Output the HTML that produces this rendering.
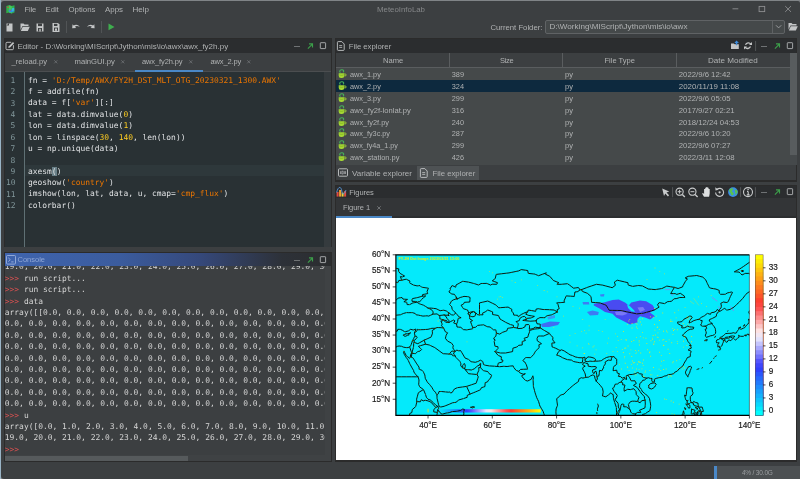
<!DOCTYPE html>
<html lang="en"><head><meta charset="utf-8"><title>MeteoInfoLab</title>
<style>
*{box-sizing:border-box;margin:0;padding:0}
html,body{width:800px;height:479px;overflow:hidden;background:#808487}
body{font-family:"Liberation Sans", "DejaVu Sans", sans-serif;font-size:8.3px;color:#bbbbbb;position:relative}
.abs{position:absolute}
#root{position:absolute;left:0;top:0;width:800px;height:479px;will-change:transform;transform:translateZ(0)}
#win{position:absolute;left:1px;top:1px;width:799px;height:478px;background:#3c3f41;border-radius:3px 2px 1px 3px;overflow:hidden}
.t{position:absolute;white-space:pre;line-height:12px;height:12px}
.mono{font-family:"DejaVu Sans Mono", "Liberation Mono", monospace;font-size:7.93px;white-space:pre;position:absolute}
.ptitle{position:absolute;background:#2b2d2f;height:14px}
svg{position:absolute;overflow:visible}
</style></head>
<body>
<div id="root">
<div class="abs" style="left:0px;top:0px;width:1.2px;height:479px;background:#9ab4c6;"></div><div id="win"></div><svg style="left:5.8px;top:4.6px" width="9" height="9" viewBox="0 0 9 9">
<path d="M0.3 1l2.6-0.8 2.8 0.9 2.8-0.8v7.2l-2.8 0.9-2.8-0.9-2.6 0.8z" fill="#2fb24a"/>
<path d="M2.9 0.2l2.8 0.9v7.3l-2.8-0.9z" fill="#45c85a"/>
<path d="M2.6 5.2l1.6-1 1.2 0.8 1.4-2.2 1.5 0.4v3l-2.6 1.4-3.1-1z" fill="#2f8fe0"/>
<path d="M6.2 3.2l1.6-0.4v2.6l-1.6 0.8z" fill="#37c6d8"/>
<circle cx="2" cy="2.3" r="0.8" fill="#e0463c"/><circle cx="4.3" cy="5.2" r="0.55" fill="#e0463c"/>
</svg><div class="t" style="left:24.50px;top:3.70px;color:#b0b2b3;font-size:7.50px;letter-spacing:-0.146px;">File</div><div class="t" style="left:45.50px;top:3.70px;color:#b0b2b3;font-size:7.69px;letter-spacing:0.000px;">Edit</div><div class="t" style="left:68.50px;top:3.70px;color:#b0b2b3;font-size:7.83px;letter-spacing:0.000px;">Options</div><div class="t" style="left:105.00px;top:3.70px;color:#b0b2b3;font-size:7.90px;letter-spacing:0.000px;">Apps</div><div class="t" style="left:132.50px;top:3.70px;color:#b0b2b3;font-size:8.02px;letter-spacing:0.000px;">Help</div><div class="t" style="left:377.00px;top:3.70px;color:#858789;font-size:7.85px;letter-spacing:0.000px;">MeteoInfoLab</div><svg style="left:700px;top:0" width="100" height="18" viewBox="0 0 100 18">
<path d="M32.5 8.8h5.8" stroke="#8d8f91" stroke-width="0.9" fill="none"/>
<rect x="59.1" y="6.4" width="5.6" height="5.2" stroke="#8d8f91" stroke-width="0.9" fill="none"/>
<path d="M85.2 6.1l5.8 5.8M91 6.1l-5.8 5.8" stroke="#8d8f91" stroke-width="0.9" fill="none"/>
</svg><svg style="left:0;top:18px" width="130" height="18" viewBox="0 0 130 18">
<!-- new -->
<path d="M6.5 5.5h4l2 0v8h-6z" fill="#c4c6c7"/><path d="M6.5 7.5l2.5-2.5v2.5z" fill="#3c3f41"/>
<!-- open -->
<path d="M20.5 5.5h3l1 1h4v1.5h-6l-2 4z" fill="#c4c6c7"/><path d="M22.8 8.8h7l-2 4.2h-7z" fill="#c4c6c7"/>
<!-- save -->
<path d="M36.5 5.5h7v8h-7z" fill="#c4c6c7"/><rect x="38" y="5.5" width="4" height="2.6" fill="#3c3f41"/><rect x="38" y="10" width="4" height="3.5" fill="#3c3f41"/><rect x="39.3" y="10.8" width="1.4" height="2.7" fill="#c4c6c7"/>
<!-- save as -->
<path d="M52.5 5h5.5l1.5 1.5v7.5h-7z" fill="#c4c6c7"/><rect x="54" y="5.8" width="3.4" height="2.2" fill="#3c3f41"/><rect x="54" y="9.6" width="4" height="3.2" fill="#3c3f41"/><rect x="55" y="10.5" width="2" height="2.3" fill="#c4c6c7"/>
<path d="M66.5 3v12" stroke="#515456" stroke-width="1"/>
<!-- undo -->
<path d="M72.2 10.3l0.3-4 1.2 1.2c2-1.4 4.6-1 6 1.6-1.8-1.3-3.4-1.3-4.8-0.4l1.3 1.3z" fill="#c4c6c7"/>
<!-- redo -->
<path d="M94.6 10.3l-0.3-4-1.2 1.2c-2-1.4-4.6-1-6 1.6 1.8-1.3 3.4-1.3 4.8-0.4l-1.3 1.3z" fill="#c4c6c7"/>
<path d="M101.5 3v12" stroke="#515456" stroke-width="1"/>
<!-- run -->
<path d="M108.5 5.5l6 3.4-6 3.4z" fill="#3fae4e"/>
</svg><div class="t" style="left:490.50px;top:21.60px;color:#b0b2b3;font-size:7.73px;letter-spacing:0.000px;">Current Folder:</div><div class="abs" style="left:545px;top:20px;width:240px;height:13.6px;background:#45494a;border:1px solid #606365;border-radius:2px"></div><div class="t" style="left:549.50px;top:21.20px;color:#b0b2b3;font-size:8.10px;letter-spacing:0.000px;">D:\Working\MIScript\Jython\mis\io\awx</div><div class="abs" style="left:772px;top:20.5px;width:1px;height:12.5px;background:#5f6264;"></div><svg style="left:772px;top:19px" width="13" height="15" viewBox="0 0 13 15"><path d="M4 6.3l2.6 2.6 2.6-2.6" stroke="#9a9c9e" stroke-width="1" fill="none"/></svg><svg style="left:788px;top:21px" width="11" height="11" viewBox="0 0 11 11"><path d="M0.5 2h3l1 1h4v1.5h-6l-2 4z" fill="#c4c6c7"/><path d="M2.8 5.3h7l-2 4.2h-7z" fill="#c4c6c7"/></svg><div class="abs" style="left:4px;top:38px;width:327.5px;height:209px;background:#2b2b2b;"></div><div class="abs" style="left:5px;top:39px;width:325.5px;height:14px;background:#2b2d2f;"></div><svg style="left:5px;top:41.2px" width="10" height="10" viewBox="0 0 10 10">
<path d="M6.2 1.3h-4.2a1 1 0 0 0 -1 1v5.4a1 1 0 0 0 1 1h5.4a1 1 0 0 0 1 -1v-3.5" stroke="#c4c6c7" stroke-width="0.9" fill="none"/>
<path d="M3.3 6.9l0.5-1.7 4.2-4.2 1.2 1.2-4.2 4.2z" fill="#c4c6c7"/></svg><div class="t" style="left:17.50px;top:40.50px;color:#b0b2b3;font-size:7.99px;letter-spacing:0.000px;">Editor - D:\Working\MIScript\Jython\mis\io\awx\awx_fy2h.py</div><svg style="left:291px;top:40px" width="40" height="12" viewBox="0 0 40 12">
<path d="M3 6.5h6" stroke="#6f7274" stroke-width="1" fill="none"/>
<path d="M16.9 8.6l4-4M18 3.9h3.5v3.5" stroke="#3c9f4a" stroke-width="1.15" fill="none"/>
<rect x="29.3" y="2.7" width="5.3" height="5.9" stroke="#a2a4a6" stroke-width="1" fill="none" rx="0.4"/>
</svg><div class="abs" style="left:5px;top:53px;width:325.5px;height:19px;background:#3c3f41;"></div><div class="abs" style="left:5px;top:70.8px;width:325.5px;height:1px;background:#4b4e50;"></div><div class="t" style="left:11.50px;top:55.50px;color:#b0b2b3;font-size:7.60px;letter-spacing:0.000px;">_reload.py</div><svg style="left:53.7px;top:59.9px" width="3.6" height="3.6" viewBox="0 0 4 4"><path d="M0.3 0.3l3.4 3.4M3.7 0.3l-3.4 3.4" stroke="#7d8082" stroke-width="0.7"/></svg><div class="t" style="left:74.50px;top:55.50px;color:#b0b2b3;font-size:7.67px;letter-spacing:0.000px;">mainGUI.py</div><svg style="left:120.7px;top:59.9px" width="3.6" height="3.6" viewBox="0 0 4 4"><path d="M0.3 0.3l3.4 3.4M3.7 0.3l-3.4 3.4" stroke="#7d8082" stroke-width="0.7"/></svg><div class="t" style="left:142.00px;top:55.50px;color:#b0b2b3;font-size:7.50px;letter-spacing:-0.108px;">awx_fy2h.py</div><svg style="left:188.7px;top:59.9px" width="3.6" height="3.6" viewBox="0 0 4 4"><path d="M0.3 0.3l3.4 3.4M3.7 0.3l-3.4 3.4" stroke="#7d8082" stroke-width="0.7"/></svg><div class="t" style="left:210.50px;top:55.50px;color:#b0b2b3;font-size:7.50px;letter-spacing:-0.148px;">awx_2.py</div><svg style="left:247.2px;top:59.9px" width="3.6" height="3.6" viewBox="0 0 4 4"><path d="M0.3 0.3l3.4 3.4M3.7 0.3l-3.4 3.4" stroke="#7d8082" stroke-width="0.7"/></svg><div class="abs" style="left:135px;top:70px;width:68px;height:1.7px;background:#4a88c7;"></div><div class="abs" style="left:5px;top:72px;width:319px;height:174.5px;background:#293134;"></div><div class="abs" style="left:324px;top:72px;width:6.5px;height:174.5px;background:#353b3e;"></div><div class="abs" style="left:25px;top:165.01px;width:299px;height:11.37px;background:#2e383b;"></div><div class="abs" style="left:24px;top:72px;width:1px;height:174.5px;background:#5f7074;"></div><div class="mono" style="left:10.6px;top:74.95px;line-height:11.37px;color:#81969a">1</div><div class="mono" style="left:28px;top:74.75px;line-height:11.37px"><span style="color:#e0e2e4">fn = </span><span style="color:#ec7600">&#x27;D:/Temp/AWX/FY2H_DST_MLT_OTG_20230321_1300.AWX&#x27;</span></div><div class="mono" style="left:10.6px;top:86.32000000000001px;line-height:11.37px;color:#81969a">2</div><div class="mono" style="left:28px;top:86.12px;line-height:11.37px"><span style="color:#e0e2e4">f = addfile(fn)</span></div><div class="mono" style="left:10.6px;top:97.69px;line-height:11.37px;color:#81969a">3</div><div class="mono" style="left:28px;top:97.49px;line-height:11.37px"><span style="color:#e0e2e4">data = f[</span><span style="color:#ec7600">&#x27;var&#x27;</span><span style="color:#e0e2e4">][:]</span></div><div class="mono" style="left:10.6px;top:109.06px;line-height:11.37px;color:#81969a">4</div><div class="mono" style="left:28px;top:108.86px;line-height:11.37px"><span style="color:#e0e2e4">lat = data.dimvalue(</span><span style="color:#ffcd22">0</span><span style="color:#e0e2e4">)</span></div><div class="mono" style="left:10.6px;top:120.42999999999999px;line-height:11.37px;color:#81969a">5</div><div class="mono" style="left:28px;top:120.22999999999999px;line-height:11.37px"><span style="color:#e0e2e4">lon = data.dimvalue(</span><span style="color:#ffcd22">1</span><span style="color:#e0e2e4">)</span></div><div class="mono" style="left:10.6px;top:131.79999999999998px;line-height:11.37px;color:#81969a">6</div><div class="mono" style="left:28px;top:131.6px;line-height:11.37px"><span style="color:#e0e2e4">lon = linspace(</span><span style="color:#ffcd22">30</span><span style="color:#e0e2e4">, </span><span style="color:#ffcd22">140</span><span style="color:#e0e2e4">, len(lon))</span></div><div class="mono" style="left:10.6px;top:143.17px;line-height:11.37px;color:#81969a">7</div><div class="mono" style="left:28px;top:142.97px;line-height:11.37px"><span style="color:#e0e2e4">u = np.unique(data)</span></div><div class="mono" style="left:10.6px;top:154.53999999999996px;line-height:11.37px;color:#81969a">8</div><div class="mono" style="left:10.6px;top:165.90999999999997px;line-height:11.37px;color:#81969a">9</div><div class="mono" style="left:28px;top:165.70999999999998px;line-height:11.37px"><span style="color:#e0e2e4">axesm</span><span style="color:#e0e2e4;background:#6a8088">(</span><span style="color:#e0e2e4">)</span></div><div class="mono" style="left:5.9px;top:177.27999999999997px;line-height:11.37px;color:#81969a">10</div><div class="mono" style="left:28px;top:177.07999999999998px;line-height:11.37px"><span style="color:#e0e2e4">geoshow(</span><span style="color:#ec7600">&#x27;country&#x27;</span><span style="color:#e0e2e4">)</span></div><div class="mono" style="left:5.9px;top:188.64999999999998px;line-height:11.37px;color:#81969a">11</div><div class="mono" style="left:28px;top:188.45px;line-height:11.37px"><span style="color:#e0e2e4">imshow(lon, lat, data, u, cmap=</span><span style="color:#ec7600">&#x27;cmp_flux&#x27;</span><span style="color:#e0e2e4">)</span></div><div class="mono" style="left:5.9px;top:200.01999999999998px;line-height:11.37px;color:#81969a">12</div><div class="mono" style="left:28px;top:199.82px;line-height:11.37px"><span style="color:#e0e2e4">colorbar()</span></div><div class="abs" style="left:4px;top:252px;width:327.5px;height:210px;background:#2b2b2b;"></div><div class="abs" style="left:5px;top:253px;width:325.5px;height:12.6px;background:linear-gradient(90deg,#3f64ae 0%,#3b5c9e 35%,#35487a 60%,#2d3138 85%,#2b2d2f 100%)"></div><svg style="left:5.5px;top:254.5px" width="10" height="10" viewBox="0 0 10 10">
<rect x="0.5" y="0.5" width="9" height="8.6" rx="1" stroke="#9ab0dd" stroke-width="0.9" fill="none"/>
<path d="M2.3 2.8l2 1.9-2 1.9M5.2 6.9h2.4" stroke="#9ab0dd" stroke-width="0.9" fill="none"/></svg><div class="t" style="left:17.50px;top:253.70px;color:#8fa6d6;font-size:7.50px;letter-spacing:-0.003px;">Console</div><svg style="left:291px;top:253.5px" width="40" height="12" viewBox="0 0 40 12">
<path d="M3 6.5h6" stroke="#6f7274" stroke-width="1" fill="none"/>
<path d="M16.9 8.6l4-4M18 3.9h3.5v3.5" stroke="#3c9f4a" stroke-width="1.15" fill="none"/>
<rect x="29.3" y="2.7" width="5.3" height="5.9" stroke="#a2a4a6" stroke-width="1" fill="none" rx="0.4"/>
</svg><div class="abs" style="left:5px;top:265.6px;width:325.5px;height:195.4px;background:#3c3f41;"></div><div class="abs" style="left:5px;top:265.6px;width:319.5px;height:189.4px;overflow:hidden"><div class="mono" style="left:-0.2px;top:-4.199999999999989px;line-height:11.4px"><span style="color:#d6d6d6">19.0, 20.0, 21.0, 22.0, 23.0, 24.0, 25.0, 26.0, 27.0, 28.0, 29.0, 30.0, 31.0</span></div><div class="mono" style="left:-0.2px;top:7.199999999999989px;line-height:11.4px"><span style="color:#e25252">&gt;&gt;&gt; </span><span style="color:#d6d6d6">run script...</span></div><div class="mono" style="left:-0.2px;top:18.600000000000023px;line-height:11.4px"><span style="color:#e25252">&gt;&gt;&gt; </span><span style="color:#d6d6d6">run script...</span></div><div class="mono" style="left:-0.2px;top:30.0px;line-height:11.4px"><span style="color:#e25252">&gt;&gt;&gt; </span><span style="color:#d6d6d6">data</span></div><div class="mono" style="left:-0.2px;top:41.400000000000034px;line-height:11.4px"><span style="color:#d6d6d6">array([[0.0, 0.0, 0.0, 0.0, 0.0, 0.0, 0.0, 0.0, 0.0, 0.0, 0.0, 0.0, 0.0, 0.0, 0.0</span></div><div class="mono" style="left:-0.2px;top:52.80000000000001px;line-height:11.4px"><span style="color:#d6d6d6">0.0, 0.0, 0.0, 0.0, 0.0, 0.0, 0.0, 0.0, 0.0, 0.0, 0.0, 0.0, 0.0, 0.0, 0.0, 0.0</span></div><div class="mono" style="left:-0.2px;top:64.20000000000005px;line-height:11.4px"><span style="color:#d6d6d6">0.0, 0.0, 0.0, 0.0, 0.0, 0.0, 0.0, 0.0, 0.0, 0.0, 0.0, 0.0, 0.0, 0.0, 0.0, 0.0</span></div><div class="mono" style="left:-0.2px;top:75.60000000000002px;line-height:11.4px"><span style="color:#d6d6d6">0.0, 0.0, 0.0, 0.0, 0.0, 0.0, 0.0, 0.0, 0.0, 0.0, 0.0, 0.0, 0.0, 0.0, 0.0, 0.0</span></div><div class="mono" style="left:-0.2px;top:87.0px;line-height:11.4px"><span style="color:#d6d6d6">0.0, 0.0, 0.0, 0.0, 0.0, 0.0, 0.0, 0.0, 0.0, 0.0, 0.0, 0.0, 0.0, 0.0, 0.0, 0.0</span></div><div class="mono" style="left:-0.2px;top:98.40000000000003px;line-height:11.4px"><span style="color:#d6d6d6">0.0, 0.0, 0.0, 0.0, 0.0, 0.0, 0.0, 0.0, 0.0, 0.0, 0.0, 0.0, 0.0, 0.0, 0.0, 0.0</span></div><div class="mono" style="left:-0.2px;top:109.80000000000001px;line-height:11.4px"><span style="color:#d6d6d6">0.0, 0.0, 0.0, 0.0, 0.0, 0.0, 0.0, 0.0, 0.0, 0.0, 0.0, 0.0, 0.0, 0.0, 0.0, 0.0</span></div><div class="mono" style="left:-0.2px;top:121.20000000000005px;line-height:11.4px"><span style="color:#d6d6d6">0.0, 0.0, 0.0, 0.0, 0.0, 0.0, 0.0, 0.0, 0.0, 0.0, 0.0, 0.0, 0.0, 0.0, 0.0, 0.0</span></div><div class="mono" style="left:-0.2px;top:132.60000000000002px;line-height:11.4px"><span style="color:#d6d6d6">0.0, 0.0, 0.0, 0.0, 0.0, 0.0, 0.0, 0.0, 0.0, 0.0, 0.0, 0.0, 0.0, 0.0, 0.0, 0.0</span></div><div class="mono" style="left:-0.2px;top:144.0px;line-height:11.4px"><span style="color:#e25252">&gt;&gt;&gt; </span><span style="color:#d6d6d6">u</span></div><div class="mono" style="left:-0.2px;top:155.39999999999998px;line-height:11.4px"><span style="color:#d6d6d6">array([0.0, 1.0, 2.0, 3.0, 4.0, 5.0, 6.0, 7.0, 8.0, 9.0, 10.0, 11.0, 12.0, 13.0</span></div><div class="mono" style="left:-0.2px;top:166.8px;line-height:11.4px"><span style="color:#d6d6d6">19.0, 20.0, 21.0, 22.0, 23.0, 24.0, 25.0, 26.0, 27.0, 28.0, 29.0, 30.0, 31.0</span></div><div class="mono" style="left:-0.2px;top:178.20000000000005px;line-height:11.4px"><span style="color:#e25252">&gt;&gt;&gt; </span></div></div><div class="abs" style="left:324.5px;top:266px;width:6px;height:189px;background:#3f4244;"></div><div class="abs" style="left:5px;top:455px;width:325.5px;height:6px;background:#3f4244;"></div><div class="abs" style="left:5px;top:455.5px;width:183px;height:5.5px;background:#565a5c;"></div><div class="abs" style="left:335px;top:38px;width:462px;height:143.5px;background:#2b2b2b;"></div><div class="abs" style="left:336px;top:39px;width:460px;height:13.5px;background:#2b2d2f;"></div><svg style="left:337px;top:41.2px" width="8" height="10" viewBox="0 0 8 10">
<path d="M1.2 0.6h3.6l2.4 2.4v5.6a0.8 0.8 0 0 1 -0.8 0.8h-5.2a0.8 0.8 0 0 1 -0.8 -0.8v-7.2a0.8 0.8 0 0 1 0.8 -0.8z" stroke="#c4c6c7" stroke-width="0.9" fill="none"/>
<path d="M2.2 4.6h3M2.2 6.4h3" stroke="#c4c6c7" stroke-width="0.8"/></svg><div class="t" style="left:348.75px;top:41.00px;color:#b0b2b3;font-size:7.72px;letter-spacing:0.000px;">File explorer</div><svg style="left:730px;top:40px" width="30" height="12" viewBox="0 0 30 12">
<path d="M1 3.4h2.8l0.9 0.9h4.1v4.6h-7.8z" fill="#c4c6c7"/><path d="M6.6 5.2v-3.6M4.9 3.1l1.7-1.9 1.7 1.9" stroke="#3f8fe0" stroke-width="1.1" fill="none"/>
<path d="M20.9 4.2a3.1 3.1 0 0 0 -5.4 0.6M15.1 7.2a3.1 3.1 0 0 0 5.4 -0.6" stroke="#c4c6c7" stroke-width="1.3" fill="none"/><path d="M22 2v3h-3zM14 9.4v-3h3z" fill="#c4c6c7"/>
<path d="M25.6 1v10" stroke="#515456" stroke-width="1"/>
</svg><svg style="left:757.5px;top:40px" width="40" height="12" viewBox="0 0 40 12">
<path d="M3 6.5h6" stroke="#6f7274" stroke-width="1" fill="none"/>
<path d="M16.9 8.6l4-4M18 3.9h3.5v3.5" stroke="#3c9f4a" stroke-width="1.15" fill="none"/>
<rect x="29.3" y="2.7" width="5.3" height="5.9" stroke="#a2a4a6" stroke-width="1" fill="none" rx="0.4"/>
</svg><div class="abs" style="left:336px;top:52.5px;width:454px;height:15.5px;background:#3c3f41;"></div><div class="abs" style="left:336px;top:67.0px;width:454px;height:0.8px;background:#5a5d5f;"></div><div class="abs" style="left:448.90000000000003px;top:53px;width:0.8px;height:14.3px;background:#5a5d5f;"></div><div class="abs" style="left:562.0px;top:53px;width:0.8px;height:14.3px;background:#5a5d5f;"></div><div class="abs" style="left:675.8000000000001px;top:53px;width:0.8px;height:14.3px;background:#5a5d5f;"></div><div class="t" style="left:383.00px;top:54.70px;color:#b0b2b3;font-size:7.59px;letter-spacing:0.000px;">Name</div><div class="t" style="left:500.00px;top:54.70px;color:#b0b2b3;font-size:7.50px;letter-spacing:-0.335px;">Size</div><div class="t" style="left:604.50px;top:54.70px;color:#b0b2b3;font-size:7.55px;letter-spacing:0.000px;">File Type</div><div class="t" style="left:707.90px;top:54.70px;color:#b0b2b3;font-size:8.10px;letter-spacing:0.000px;">Date Modified</div><div class="abs" style="left:336px;top:67.8px;width:454px;height:97.2px;background:#45494a;"></div><svg style="left:338px;top:68.75px" width="9" height="10" viewBox="0 0 9 10">
<path d="M0.7 4.3h5.6v2.5a2.3 2.3 0 0 1 -2.3 2.3h-1a2.3 2.3 0 0 1 -2.3 -2.3z" fill="#a4d733"/>
<path d="M6.3 5h0.9a0.9 0.9 0 0 1 0 1.9h-0.9" stroke="#a4d733" stroke-width="0.9" fill="none"/>
<path d="M2.4 3.6c-1.3-0.9-0.8-2.6 1.2-2.8 2-0.2 2.9 1.4 1.4 2.5" stroke="#46b45a" stroke-width="1.05" fill="none"/>
<path d="M1.4 5.9c1.3 0.6 2.9 0.6 4.2 0" stroke="#7cab1f" stroke-width="0.7" fill="none"/></svg><div class="t" style="left:350.00px;top:68.77px;color:#b0b2b3;font-size:7.31px;letter-spacing:0.000px;">awx_1.py</div><div class="t" style="left:451.75px;top:68.77px;color:#b0b2b3;font-size:7.34px;letter-spacing:0.000px;">389</div><div class="t" style="left:565.00px;top:68.77px;color:#b0b2b3;font-size:7.57px;letter-spacing:0.000px;">py</div><div class="t" style="left:678.80px;top:68.77px;color:#b0b2b3;font-size:7.75px;letter-spacing:0.000px;">2022/9/6 12:42</div><div class="abs" style="left:336px;top:79.78999999999999px;width:454px;height:11.94px;background:#0d293e;"></div><svg style="left:338px;top:80.69px" width="9" height="10" viewBox="0 0 9 10">
<path d="M0.7 4.3h5.6v2.5a2.3 2.3 0 0 1 -2.3 2.3h-1a2.3 2.3 0 0 1 -2.3 -2.3z" fill="#a4d733"/>
<path d="M6.3 5h0.9a0.9 0.9 0 0 1 0 1.9h-0.9" stroke="#a4d733" stroke-width="0.9" fill="none"/>
<path d="M2.4 3.6c-1.3-0.9-0.8-2.6 1.2-2.8 2-0.2 2.9 1.4 1.4 2.5" stroke="#46b45a" stroke-width="1.05" fill="none"/>
<path d="M1.4 5.9c1.3 0.6 2.9 0.6 4.2 0" stroke="#7cab1f" stroke-width="0.7" fill="none"/></svg><div class="t" style="left:350.00px;top:80.71px;color:#b0b2b3;font-size:7.31px;letter-spacing:0.000px;">awx_2.py</div><div class="t" style="left:451.75px;top:80.71px;color:#b0b2b3;font-size:7.34px;letter-spacing:0.000px;">324</div><div class="t" style="left:565.00px;top:80.71px;color:#b0b2b3;font-size:7.57px;letter-spacing:0.000px;">py</div><div class="t" style="left:678.80px;top:80.71px;color:#b0b2b3;font-size:7.92px;letter-spacing:0.000px;">2020/11/19 11:08</div><svg style="left:338px;top:92.63px" width="9" height="10" viewBox="0 0 9 10">
<path d="M0.7 4.3h5.6v2.5a2.3 2.3 0 0 1 -2.3 2.3h-1a2.3 2.3 0 0 1 -2.3 -2.3z" fill="#a4d733"/>
<path d="M6.3 5h0.9a0.9 0.9 0 0 1 0 1.9h-0.9" stroke="#a4d733" stroke-width="0.9" fill="none"/>
<path d="M2.4 3.6c-1.3-0.9-0.8-2.6 1.2-2.8 2-0.2 2.9 1.4 1.4 2.5" stroke="#46b45a" stroke-width="1.05" fill="none"/>
<path d="M1.4 5.9c1.3 0.6 2.9 0.6 4.2 0" stroke="#7cab1f" stroke-width="0.7" fill="none"/></svg><div class="t" style="left:350.00px;top:92.65px;color:#b0b2b3;font-size:7.31px;letter-spacing:0.000px;">awx_3.py</div><div class="t" style="left:451.75px;top:92.65px;color:#b0b2b3;font-size:7.34px;letter-spacing:0.000px;">299</div><div class="t" style="left:565.00px;top:92.65px;color:#b0b2b3;font-size:7.57px;letter-spacing:0.000px;">py</div><div class="t" style="left:678.80px;top:92.65px;color:#b0b2b3;font-size:7.75px;letter-spacing:0.000px;">2022/9/6 05:05</div><svg style="left:338px;top:104.57px" width="9" height="10" viewBox="0 0 9 10">
<path d="M0.7 4.3h5.6v2.5a2.3 2.3 0 0 1 -2.3 2.3h-1a2.3 2.3 0 0 1 -2.3 -2.3z" fill="#a4d733"/>
<path d="M6.3 5h0.9a0.9 0.9 0 0 1 0 1.9h-0.9" stroke="#a4d733" stroke-width="0.9" fill="none"/>
<path d="M2.4 3.6c-1.3-0.9-0.8-2.6 1.2-2.8 2-0.2 2.9 1.4 1.4 2.5" stroke="#46b45a" stroke-width="1.05" fill="none"/>
<path d="M1.4 5.9c1.3 0.6 2.9 0.6 4.2 0" stroke="#7cab1f" stroke-width="0.7" fill="none"/></svg><div class="t" style="left:350.00px;top:104.59px;color:#b0b2b3;font-size:7.62px;letter-spacing:0.000px;">awx_fy2f-lonlat.py</div><div class="t" style="left:451.75px;top:104.59px;color:#b0b2b3;font-size:7.34px;letter-spacing:0.000px;">316</div><div class="t" style="left:565.00px;top:104.59px;color:#b0b2b3;font-size:7.57px;letter-spacing:0.000px;">py</div><div class="t" style="left:678.80px;top:104.59px;color:#b0b2b3;font-size:7.72px;letter-spacing:0.000px;">2017/9/27 02:21</div><svg style="left:338px;top:116.50999999999999px" width="9" height="10" viewBox="0 0 9 10">
<path d="M0.7 4.3h5.6v2.5a2.3 2.3 0 0 1 -2.3 2.3h-1a2.3 2.3 0 0 1 -2.3 -2.3z" fill="#a4d733"/>
<path d="M6.3 5h0.9a0.9 0.9 0 0 1 0 1.9h-0.9" stroke="#a4d733" stroke-width="0.9" fill="none"/>
<path d="M2.4 3.6c-1.3-0.9-0.8-2.6 1.2-2.8 2-0.2 2.9 1.4 1.4 2.5" stroke="#46b45a" stroke-width="1.05" fill="none"/>
<path d="M1.4 5.9c1.3 0.6 2.9 0.6 4.2 0" stroke="#7cab1f" stroke-width="0.7" fill="none"/></svg><div class="t" style="left:350.00px;top:116.53px;color:#b0b2b3;font-size:7.39px;letter-spacing:0.000px;">awx_fy2f.py</div><div class="t" style="left:451.75px;top:116.53px;color:#b0b2b3;font-size:7.34px;letter-spacing:0.000px;">240</div><div class="t" style="left:565.00px;top:116.53px;color:#b0b2b3;font-size:7.57px;letter-spacing:0.000px;">py</div><div class="t" style="left:678.80px;top:116.53px;color:#b0b2b3;font-size:7.77px;letter-spacing:0.000px;">2018/12/24 04:53</div><svg style="left:338px;top:128.45px" width="9" height="10" viewBox="0 0 9 10">
<path d="M0.7 4.3h5.6v2.5a2.3 2.3 0 0 1 -2.3 2.3h-1a2.3 2.3 0 0 1 -2.3 -2.3z" fill="#a4d733"/>
<path d="M6.3 5h0.9a0.9 0.9 0 0 1 0 1.9h-0.9" stroke="#a4d733" stroke-width="0.9" fill="none"/>
<path d="M2.4 3.6c-1.3-0.9-0.8-2.6 1.2-2.8 2-0.2 2.9 1.4 1.4 2.5" stroke="#46b45a" stroke-width="1.05" fill="none"/>
<path d="M1.4 5.9c1.3 0.6 2.9 0.6 4.2 0" stroke="#7cab1f" stroke-width="0.7" fill="none"/></svg><div class="t" style="left:350.00px;top:128.47px;color:#b0b2b3;font-size:7.27px;letter-spacing:0.000px;">awx_fy3c.py</div><div class="t" style="left:451.75px;top:128.47px;color:#b0b2b3;font-size:7.34px;letter-spacing:0.000px;">287</div><div class="t" style="left:565.00px;top:128.47px;color:#b0b2b3;font-size:7.57px;letter-spacing:0.000px;">py</div><div class="t" style="left:678.80px;top:128.47px;color:#b0b2b3;font-size:7.75px;letter-spacing:0.000px;">2022/9/6 10:20</div><svg style="left:338px;top:140.39000000000001px" width="9" height="10" viewBox="0 0 9 10">
<path d="M0.7 4.3h5.6v2.5a2.3 2.3 0 0 1 -2.3 2.3h-1a2.3 2.3 0 0 1 -2.3 -2.3z" fill="#a4d733"/>
<path d="M6.3 5h0.9a0.9 0.9 0 0 1 0 1.9h-0.9" stroke="#a4d733" stroke-width="0.9" fill="none"/>
<path d="M2.4 3.6c-1.3-0.9-0.8-2.6 1.2-2.8 2-0.2 2.9 1.4 1.4 2.5" stroke="#46b45a" stroke-width="1.05" fill="none"/>
<path d="M1.4 5.9c1.3 0.6 2.9 0.6 4.2 0" stroke="#7cab1f" stroke-width="0.7" fill="none"/></svg><div class="t" style="left:350.00px;top:140.41px;color:#b0b2b3;font-size:7.20px;letter-spacing:-0.002px;">awx_fy4a_1.py</div><div class="t" style="left:451.75px;top:140.41px;color:#b0b2b3;font-size:7.34px;letter-spacing:0.000px;">299</div><div class="t" style="left:565.00px;top:140.41px;color:#b0b2b3;font-size:7.57px;letter-spacing:0.000px;">py</div><div class="t" style="left:678.80px;top:140.41px;color:#b0b2b3;font-size:7.75px;letter-spacing:0.000px;">2022/9/6 07:27</div><svg style="left:338px;top:152.33px" width="9" height="10" viewBox="0 0 9 10">
<path d="M0.7 4.3h5.6v2.5a2.3 2.3 0 0 1 -2.3 2.3h-1a2.3 2.3 0 0 1 -2.3 -2.3z" fill="#a4d733"/>
<path d="M6.3 5h0.9a0.9 0.9 0 0 1 0 1.9h-0.9" stroke="#a4d733" stroke-width="0.9" fill="none"/>
<path d="M2.4 3.6c-1.3-0.9-0.8-2.6 1.2-2.8 2-0.2 2.9 1.4 1.4 2.5" stroke="#46b45a" stroke-width="1.05" fill="none"/>
<path d="M1.4 5.9c1.3 0.6 2.9 0.6 4.2 0" stroke="#7cab1f" stroke-width="0.7" fill="none"/></svg><div class="t" style="left:350.00px;top:152.35px;color:#b0b2b3;font-size:7.48px;letter-spacing:0.000px;">awx_station.py</div><div class="t" style="left:451.75px;top:152.35px;color:#b0b2b3;font-size:7.34px;letter-spacing:0.000px;">426</div><div class="t" style="left:565.00px;top:152.35px;color:#b0b2b3;font-size:7.57px;letter-spacing:0.000px;">py</div><div class="t" style="left:678.80px;top:152.35px;color:#b0b2b3;font-size:7.80px;letter-spacing:0.000px;">2022/3/11 12:08</div><div class="abs" style="left:790.2px;top:52.5px;width:6.4px;height:112.5px;background:#45494b;"></div><div class="abs" style="left:790.2px;top:52.5px;width:6.4px;height:102px;background:#585c5e;"></div><div class="abs" style="left:336px;top:165px;width:460px;height:15px;background:#3c3f41;"></div><div class="abs" style="left:417px;top:165.5px;width:62px;height:14.5px;background:#4e5254;"></div><svg style="left:337.5px;top:168.2px" width="10" height="9" viewBox="0 0 10 9">
<rect x="0.5" y="0.8" width="9" height="7.4" rx="0.8" stroke="#c4c6c7" stroke-width="0.9" fill="none"/>
<path d="M2.5 3.2v2.8M3.8 3.2h1.4v2.8h-1.4zM6.6 3.2v2.8M7.5 3.2v2.8" stroke="#c4c6c7" stroke-width="0.6" fill="none"/></svg><div class="t" style="left:352.00px;top:168.00px;color:#b0b2b3;font-size:8.02px;letter-spacing:0.000px;">Variable explorer</div><svg style="left:420px;top:168px" width="8" height="10" viewBox="0 0 8 10">
<path d="M1.2 0.6h3.6l2.4 2.4v5.6a0.8 0.8 0 0 1 -0.8 0.8h-5.2a0.8 0.8 0 0 1 -0.8 -0.8v-7.2a0.8 0.8 0 0 1 0.8 -0.8z" stroke="#c4c6c7" stroke-width="0.9" fill="none"/>
<path d="M2.2 4.6h3M2.2 6.4h3" stroke="#c4c6c7" stroke-width="0.8"/></svg><div class="t" style="left:432.50px;top:168.00px;color:#b0b2b3;font-size:7.77px;letter-spacing:0.000px;">File explorer</div><div class="abs" style="left:335px;top:185px;width:462px;height:277px;background:#2b2b2b;"></div><div class="abs" style="left:336px;top:186px;width:460px;height:12px;background:#2b2d2f;"></div><svg style="left:335.8px;top:187.2px" width="11" height="10" viewBox="0 0 11 10">
<rect x="0.6" y="5" width="2" height="4.6" fill="#e04a3f"/><rect x="3.1" y="3" width="2" height="6.6" fill="#f0a030"/><rect x="5.6" y="5.6" width="2" height="4" fill="#e9d23c"/><rect x="8.1" y="4" width="2" height="5.6" fill="#e04a3f"/>
<path d="M0.6 5.5c1.6-6.5 4.4-6.5 5.2-1.5s2.6 3 4.2-1" stroke="#5a9be0" stroke-width="0.9" fill="none"/></svg><div class="t" style="left:349.25px;top:186.80px;color:#b0b2b3;font-size:7.50px;letter-spacing:-0.073px;">Figures</div><div class="abs" style="left:336px;top:198px;width:460px;height:19.8px;background:#333537;"></div><div class="t" style="left:343.00px;top:202.40px;color:#b0b2b3;font-size:7.50px;letter-spacing:-0.064px;">Figure 1</div><svg style="left:377px;top:206px" width="4" height="4" viewBox="0 0 4 4"><path d="M0.3 0.3l3.4 3.4M3.7 0.3l-3.4 3.4" stroke="#8a8d8f" stroke-width="0.7"/></svg><div class="abs" style="left:336px;top:216.2px;width:460px;height:1.6px;background:#2c2e30;"></div><div class="abs" style="left:336px;top:215.9px;width:55.5px;height:1.9px;background:#4a88c7;"></div><div class="abs" style="left:336px;top:217.8px;width:459.9px;height:242.6px;background:#ffffff;"></div><svg style="left:757.5px;top:185.9px" width="40" height="12" viewBox="0 0 40 12">
<path d="M3 6.5h6" stroke="#6f7274" stroke-width="1" fill="none"/>
<path d="M16.9 8.6l4-4M18 3.9h3.5v3.5" stroke="#3c9f4a" stroke-width="1.15" fill="none"/>
<rect x="29.3" y="2.7" width="5.3" height="5.9" stroke="#a2a4a6" stroke-width="1" fill="none" rx="0.4"/>
</svg><svg style="left:658px;top:185.5px" width="100" height="13" viewBox="0 0 100 13">
<path d="M4.2 2.4l7 3-2.7 1.1 2.6 2.8-1.2 1.1-2.6-2.8-1.3 2.5z" fill="#c9cbcc"/>
<path d="M14.6 1.2v10" stroke="#55585a" stroke-width="1"/>
<circle cx="21.6" cy="5.7" r="3.6" stroke="#c9cbcc" stroke-width="1.1" fill="none"/><path d="M24.3 8.4l2.5 2.5" stroke="#c9cbcc" stroke-width="1.4"/><path d="M19.7 5.7h3.8M21.6 3.8v3.8" stroke="#c9cbcc" stroke-width="1"/>
<circle cx="34.4" cy="5.7" r="3.6" stroke="#c9cbcc" stroke-width="1.1" fill="none"/><path d="M37.1 8.4l2.5 2.5" stroke="#c9cbcc" stroke-width="1.4"/><path d="M32.5 5.7h3.8" stroke="#c9cbcc" stroke-width="1"/>
<path d="M46 10.8l-1.9-3.2 0.9-0.6 1.1 1.1v-5h1.1v-1.3h1.1v-0.7h1.2v0.7h1.1v1.1h1.1v4.7l-0.6 3.2z" fill="#dcdedf"/>
<path d="M58.9 3.4a4 4 0 1 1 -1.3 3" stroke="#c9cbcc" stroke-width="1.1" fill="none"/><path d="M57.2 1.2l0.4 3.3 3-0.8z" fill="#c9cbcc"/><circle cx="61.6" cy="6.3" r="1.1" fill="#c9cbcc"/>
<circle cx="75" cy="6.1" r="4.9" fill="#3b8ee6"/>
<path d="M71.8 3c1.4-1.2 3-0.7 3.5-0.2 0.2 1.2-1.4 1.4-1.2 2.6s1.9 0.7 1.6 2.3-1.6 2.1-2.3 1.4-0.5-2.1-1.6-2.8-0.7-2.6 0-3.3zM77.6 3.5c1.2 0.5 1.9 1.4 2.1 2.6-0.7 0.9-1.2 2.3-2.3 2.8-0.5-1.2 0.5-1.9-0.2-2.8s-0.5-1.9 0.4-2.6z" fill="#58c24e"/>
<path d="M82.6 1.2v10" stroke="#55585a" stroke-width="1"/>
<circle cx="90" cy="6.1" r="4.5" stroke="#c9cbcc" stroke-width="1.1" fill="none"/><path d="M90.2 5.4v3.4M88.8 8.9h2.8M89 5.4h1.2" stroke="#c9cbcc" stroke-width="1.1"/><circle cx="90.1" cy="3.5" r="0.8" fill="#c9cbcc"/>
<path d="M97.4 1.2v10" stroke="#55585a" stroke-width="1"/>
</svg><svg style="left:0;top:0" width="800" height="479" viewBox="0 0 800 479" font-family='"Liberation Sans", "DejaVu Sans", sans-serif'>
<defs><clipPath id="pc"><rect x="395.9" y="254.8" width="353.5" height="160.5"/></clipPath><filter id="bl2" x="-20%" y="-20%" width="140%" height="140%"><feGaussianBlur stdDeviation="0.45"/></filter><linearGradient id="strip" x1="0" x2="1" y1="0" y2="0"><stop offset="0.048" stop-color="rgb(8,222,253)"/><stop offset="0.095" stop-color="rgb(16,189,253)"/><stop offset="0.143" stop-color="rgb(24,157,253)"/><stop offset="0.190" stop-color="rgb(32,125,253)"/><stop offset="0.238" stop-color="rgb(40,93,253)"/><stop offset="0.286" stop-color="rgb(48,60,253)"/><stop offset="0.333" stop-color="rgb(85,85,253)"/><stop offset="0.381" stop-color="rgb(133,133,253)"/><stop offset="0.429" stop-color="rgb(181,181,253)"/><stop offset="0.476" stop-color="rgb(230,230,253)"/><stop offset="0.524" stop-color="rgb(253,230,230)"/><stop offset="0.571" stop-color="rgb(253,181,181)"/><stop offset="0.619" stop-color="rgb(253,133,133)"/><stop offset="0.667" stop-color="rgb(253,85,85)"/><stop offset="0.714" stop-color="rgb(253,60,48)"/><stop offset="0.762" stop-color="rgb(253,93,40)"/><stop offset="0.810" stop-color="rgb(253,125,32)"/><stop offset="0.857" stop-color="rgb(253,157,24)"/><stop offset="0.905" stop-color="rgb(253,189,16)"/><stop offset="0.952" stop-color="rgb(253,224,8)"/><stop offset="1.000" stop-color="rgb(253,253,0)"/></linearGradient></defs>
<rect x="395.9" y="254.8" width="353.5" height="160.5" fill="#04eafb"/>
<g clip-path="url(#pc)">
<g filter="url(#bl2)">
<path d="M593.8 303.8 L603.8 302.5 L612.5 300.0 L618.8 299.4 L625.0 302.5 L628.8 305.6 L631.2 302.5 L640.0 300.6 L646.2 301.2 L652.5 305.0 L655.0 308.8 L655.0 310.0 L650.0 312.5 L655.0 316.2 L650.0 319.4 L645.0 317.5 L640.0 316.2 L637.5 318.8 L637.5 322.5 L630.0 324.4 L623.8 321.2 L616.2 317.5 L612.5 313.8 L605.0 311.9 L600.0 308.8 L593.8 305.6Z M626.9 303.8 L628.1 308.1 L631.2 311.2 L635.0 311.9 L633.8 310.0 L630.0 306.2Z" fill="#4a4cf1" fill-rule="evenodd"/>
<path d="M615.0 311.9 L622.5 311.2 L627.5 313.8 L622.5 315.6 L616.2 315.0Z M637.5 307.5 L643.1 306.9 L645.0 310.0 L640.0 311.9Z" fill="#7a78f6"/>
<path d="M582.5 301.9 L588.8 301.9 L589.4 304.4 L583.1 304.4Z M586.9 311.9 L592.5 310.6 L598.8 311.9 L598.1 315.0 L590.0 315.6Z M600.0 294.4 L604.4 294.0 L604.0 296.5 L600.6 296.5Z" fill="#3d7cf4"/>
<path d="M541 324 L550 321.5 L560 322 L558 325 L549 327 L542 327Z" fill="#3f6cf4"/>
<path d="M547.5 317 L555 315 L555 318 L548 319.5Z" fill="#3f8cf4" opacity="0.85"/>
</g>
<path d="M711.9 297.3L717.3 301.3M718.2 306.3L720.7 309.4M730.7 306.3L733.6 311M665 289.6h5M671 294.6l2.5 1" stroke="#8c80f2" stroke-width="0.9" fill="none" opacity="0.9"/>
<path d="M693.5 298l5.5 7.5M690 301l4 3" stroke="#cfe03a" stroke-width="0.6" fill="none" opacity="0.7"/>
<rect x="436.6" y="409.2" width="104.2" height="3.3" fill="url(#strip)"/>
<rect x="427.6" y="408.8" width="0.9" height="3.6" fill="#e8e020"/>
<text x="398.5" y="259.6" font-size="3.7" font-weight="bold" fill="#e6ee1c" textLength="61" lengthAdjust="spacingAndGlyphs">FY-2H Dst Image 2023/03/21 13:00</text>
<path d="M641.5 368.4h0.9v0.9h-0.9zM668.8 374.4h0.9v0.9h-0.9zM659.2 351.8h0.9v0.9h-0.9zM649.9 316.3h0.9v0.9h-0.9zM624.8 362.8h0.9v0.9h-0.9zM638.6 368.9h0.9v0.9h-0.9zM624.3 356.2h0.9v0.9h-0.9zM682.6 366.1h0.9v0.9h-0.9zM663.0 330.8h0.9v0.9h-0.9zM645.5 337.8h0.9v0.9h-0.9zM631.6 327.6h0.9v0.9h-0.9zM650.2 355.8h0.9v0.9h-0.9zM663.4 345.1h0.9v0.9h-0.9zM639.5 318.8h0.9v0.9h-0.9zM672.8 361.2h0.9v0.9h-0.9zM662.4 339.5h0.9v0.9h-0.9zM687.5 323.8h0.9v0.9h-0.9zM624.3 347.8h0.9v0.9h-0.9zM677.7 368.3h0.9v0.9h-0.9zM670.3 321.1h0.9v0.9h-0.9zM662.3 312.5h0.9v0.9h-0.9zM672.5 334.2h0.9v0.9h-0.9zM662.9 344.8h0.9v0.9h-0.9zM684.6 307.2h0.9v0.9h-0.9zM669.9 375.3h0.9v0.9h-0.9zM673.0 330.1h0.9v0.9h-0.9zM638.2 350.3h0.9v0.9h-0.9zM653.0 367.0h0.9v0.9h-0.9zM635.1 349.9h0.9v0.9h-0.9zM652.0 337.7h0.9v0.9h-0.9zM688.2 316.9h0.9v0.9h-0.9zM649.1 352.4h0.9v0.9h-0.9zM627.0 366.4h0.9v0.9h-0.9zM633.8 362.0h0.9v0.9h-0.9zM654.9 334.6h0.9v0.9h-0.9zM649.4 351.5h0.9v0.9h-0.9zM657.5 332.4h0.9v0.9h-0.9zM670.9 375.8h0.9v0.9h-0.9zM689.6 319.9h0.9v0.9h-0.9zM687.5 318.5h0.9v0.9h-0.9zM647.2 349.3h0.9v0.9h-0.9zM623.1 331.1h0.9v0.9h-0.9zM631.9 367.5h0.9v0.9h-0.9zM642.8 375.9h0.9v0.9h-0.9zM622.9 352.0h0.9v0.9h-0.9zM665.7 368.5h0.9v0.9h-0.9zM635.5 353.2h0.9v0.9h-0.9zM644.9 370.5h0.9v0.9h-0.9zM653.4 342.7h0.9v0.9h-0.9zM643.1 359.6h0.9v0.9h-0.9zM683.7 367.6h0.9v0.9h-0.9zM658.6 368.7h0.9v0.9h-0.9zM686.6 326.4h0.9v0.9h-0.9zM636.2 351.7h0.9v0.9h-0.9zM628.4 320.5h0.9v0.9h-0.9zM658.9 320.0h0.9v0.9h-0.9zM642.0 362.8h0.9v0.9h-0.9zM685.7 317.9h0.9v0.9h-0.9zM682.8 323.0h0.9v0.9h-0.9zM633.4 340.1h0.9v0.9h-0.9zM636.1 326.6h0.9v0.9h-0.9zM632.8 362.5h0.9v0.9h-0.9zM630.9 364.2h0.9v0.9h-0.9zM654.5 329.7h0.9v0.9h-0.9zM677.1 343.2h0.9v0.9h-0.9zM629.3 319.2h0.9v0.9h-0.9zM642.2 318.3h0.9v0.9h-0.9zM628.6 370.2h0.9v0.9h-0.9zM681.8 368.7h0.9v0.9h-0.9zM669.3 353.0h0.9v0.9h-0.9zM660.3 369.9h0.9v0.9h-0.9zM668.7 339.4h0.9v0.9h-0.9zM687.3 316.3h0.9v0.9h-0.9zM632.1 360.6h0.9v0.9h-0.9zM638.9 361.5h0.9v0.9h-0.9zM663.4 360.0h0.9v0.9h-0.9zM649.4 369.9h0.9v0.9h-0.9zM652.7 335.0h0.9v0.9h-0.9zM690.0 347.6h0.9v0.9h-0.9zM691.1 341.3h0.9v0.9h-0.9zM658.9 339.7h0.9v0.9h-0.9zM681.2 366.7h0.9v0.9h-0.9zM654.0 324.1h0.9v0.9h-0.9zM660.9 354.9h0.9v0.9h-0.9zM657.7 337.2h0.9v0.9h-0.9zM661.2 360.8h0.9v0.9h-0.9zM637.6 320.5h0.9v0.9h-0.9zM656.8 336.7h0.9v0.9h-0.9zM677.9 309.7h0.9v0.9h-0.9zM665.6 341.0h0.9v0.9h-0.9zM657.2 326.6h0.9v0.9h-0.9zM652.2 338.9h0.9v0.9h-0.9zM636.1 336.9h0.9v0.9h-0.9zM651.4 374.4h0.9v0.9h-0.9zM634.5 374.4h0.9v0.9h-0.9zM670.4 319.6h0.9v0.9h-0.9zM674.3 329.1h0.9v0.9h-0.9zM684.0 367.6h0.9v0.9h-0.9zM650.5 340.3h0.9v0.9h-0.9zM642.8 364.9h0.9v0.9h-0.9zM641.0 324.4h0.9v0.9h-0.9zM642.1 331.9h0.9v0.9h-0.9zM657.2 375.0h0.9v0.9h-0.9zM679.5 359.2h0.9v0.9h-0.9zM625.3 347.5h0.9v0.9h-0.9zM690.6 316.9h0.9v0.9h-0.9zM636.0 368.5h0.9v0.9h-0.9zM691.2 336.0h0.9v0.9h-0.9zM673.0 373.1h0.9v0.9h-0.9zM650.0 374.4h0.9v0.9h-0.9zM686.5 345.0h0.9v0.9h-0.9zM642.8 337.4h0.9v0.9h-0.9zM625.2 339.4h0.9v0.9h-0.9zM634.3 371.6h0.9v0.9h-0.9zM631.3 356.0h0.9v0.9h-0.9zM639.9 321.5h0.9v0.9h-0.9zM638.7 341.5h0.9v0.9h-0.9zM629.3 353.3h0.9v0.9h-0.9zM660.5 365.4h0.9v0.9h-0.9zM654.1 308.0h0.9v0.9h-0.9zM682.9 346.7h0.9v0.9h-0.9zM655.8 315.7h0.9v0.9h-0.9zM656.8 327.0h0.9v0.9h-0.9zM684.0 325.5h0.9v0.9h-0.9zM667.6 348.8h0.9v0.9h-0.9zM643.5 375.8h0.9v0.9h-0.9zM676.3 360.3h0.9v0.9h-0.9zM638.0 361.3h0.9v0.9h-0.9zM638.9 344.6h0.9v0.9h-0.9zM627.6 345.6h0.9v0.9h-0.9zM640.3 352.5h0.9v0.9h-0.9zM654.1 341.3h0.9v0.9h-0.9zM631.2 341.1h0.9v0.9h-0.9zM621.9 349.2h0.9v0.9h-0.9zM639.8 362.1h0.9v0.9h-0.9zM663.4 339.2h0.9v0.9h-0.9zM677.1 329.3h0.9v0.9h-0.9zM674.3 312.3h0.9v0.9h-0.9zM626.9 324.2h0.9v0.9h-0.9zM668.2 376.6h0.9v0.9h-0.9zM675.7 317.4h0.9v0.9h-0.9zM626.1 339.6h0.9v0.9h-0.9zM683.5 335.0h0.9v0.9h-0.9zM689.0 327.4h0.9v0.9h-0.9zM672.4 362.3h0.9v0.9h-0.9zM644.6 371.9h0.9v0.9h-0.9zM684.3 337.0h0.9v0.9h-0.9zM666.9 331.7h0.9v0.9h-0.9zM671.3 342.3h0.9v0.9h-0.9zM676.9 341.2h0.9v0.9h-0.9zM659.1 329.2h0.9v0.9h-0.9zM635.5 374.3h0.9v0.9h-0.9zM636.6 323.8h0.9v0.9h-0.9zM631.6 323.0h0.9v0.9h-0.9zM646.4 343.1h0.9v0.9h-0.9zM671.6 320.9h0.9v0.9h-0.9zM666.0 330.5h0.9v0.9h-0.9zM620.9 368.6h0.9v0.9h-0.9zM635.6 322.7h0.9v0.9h-0.9zM639.9 336.2h0.9v0.9h-0.9zM636.9 328.2h0.9v0.9h-0.9zM672.3 327.9h0.9v0.9h-0.9zM638.7 340.2h0.9v0.9h-0.9zM653.3 344.1h0.9v0.9h-0.9zM652.8 316.8h0.9v0.9h-0.9zM636.9 363.8h0.9v0.9h-0.9zM663.0 369.1h0.9v0.9h-0.9zM658.2 306.6h0.9v0.9h-0.9zM683.0 340.8h0.9v0.9h-0.9zM688.5 325.8h0.9v0.9h-0.9zM511.6 280.5h0.8v0.8h-0.8zM514.8 282.1h0.8v0.8h-0.8zM521.2 279.5h0.8v0.8h-0.8zM537.3 285.3h0.8v0.8h-0.8zM543.7 290.1h0.8v0.8h-0.8zM546.9 291.4h0.8v0.8h-0.8zM556.6 296.5h0.8v0.8h-0.8zM498.7 296.5h0.8v0.8h-0.8zM497.1 298.8h0.8v0.8h-0.8zM572.6 306.2h0.8v0.8h-0.8zM579.1 307.8h0.8v0.8h-0.8zM582.3 319.0h0.8v0.8h-0.8zM563.0 315.8h0.8v0.8h-0.8zM553.4 327.0h0.8v0.8h-0.8zM588.7 325.4h0.8v0.8h-0.8zM604.8 319.0h0.8v0.8h-0.8zM598.4 330.2h0.8v0.8h-0.8zM437.7 320.6h0.8v0.8h-0.8zM440.9 318.4h0.8v0.8h-0.8zM418.4 329.3h0.8v0.8h-0.8zM466.6 341.5h0.8v0.8h-0.8zM701.2 302.9h0.8v0.8h-0.8zM706.0 306.2h0.8v0.8h-0.8zM698.0 296.5h0.8v0.8h-0.8zM710.8 294.9h0.8v0.8h-0.8zM654.6 267.6h0.8v0.8h-0.8zM659.4 270.9h0.8v0.8h-0.8zM664.2 273.4h0.8v0.8h-0.8zM646.6 278.9h0.8v0.8h-0.8zM489.1 270.9h0.8v0.8h-0.8zM492.3 272.5h0.8v0.8h-0.8zM624.1 357.5h0.8v0.8h-0.8zM619.2 363.9h0.8v0.8h-0.8zM630.5 349.5h0.8v0.8h-0.8zM627.3 367.1h0.8v0.8h-0.8zM581.3 331.3h0.8v0.8h-0.8zM594.4 353.7h0.8v0.8h-0.8zM569.6 341.7h0.8v0.8h-0.8zM592.6 346.6h0.8v0.8h-0.8zM576.7 345.5h0.8v0.8h-0.8zM585.7 332.7h0.8v0.8h-0.8zM569.5 335.0h0.8v0.8h-0.8zM612.6 351.2h0.8v0.8h-0.8zM617.1 336.0h0.8v0.8h-0.8zM615.8 346.9h0.8v0.8h-0.8zM588.6 344.2h0.8v0.8h-0.8zM620.8 339.2h0.8v0.8h-0.8zM588.0 343.3h0.8v0.8h-0.8zM583.6 353.1h0.8v0.8h-0.8zM574.7 332.9h0.8v0.8h-0.8zM584.1 330.3h0.8v0.8h-0.8zM582.3 347.5h0.8v0.8h-0.8zM595.7 349.4h0.8v0.8h-0.8zM588.6 329.8h0.8v0.8h-0.8zM614.9 333.5h0.8v0.8h-0.8zM601.9 330.9h0.8v0.8h-0.8zM617.8 340.2h0.8v0.8h-0.8zM606.4 353.0h0.8v0.8h-0.8zM607.1 342.7h0.8v0.8h-0.8zM608.1 337.8h0.8v0.8h-0.8zM584.2 353.1h0.8v0.8h-0.8zM617.1 351.0h0.8v0.8h-0.8zM593.7 345.5h0.8v0.8h-0.8zM664.2 398.6h0.9v0.9h-0.9zM665.8 399.2h0.9v0.9h-0.9zM670.7 400.5h0.9v0.9h-0.9zM672.9 401.8h0.9v0.9h-0.9zM678.7 403.7h0.9v0.9h-0.9zM671.6 413.4h0.9v0.9h-0.9zM673.9 414.0h0.9v0.9h-0.9zM656.2 412.1h0.9v0.9h-0.9zM500.3 295.9h0.9v0.9h-0.9zM501.9 297.2h0.9v0.9h-0.9z" fill="#e0ea26" opacity="0.9"/>
<path d="M395.9 268.3 L398.8 268.9 L398.5 271.2 L400.1 273.4 L404.6 276.0 L402.6 276.9 L400.4 276.6 L401.7 280.2 M401.7 280.2 L398.8 280.5 L397.8 282.7 L395.9 282.1 M401.7 280.2 L406.2 279.2 L410.0 281.1 L409.4 282.7 L413.3 285.0 L417.1 285.9 L420.0 285.6 L421.6 287.2 L428.4 288.2 L427.1 291.4 L427.7 293.6 L422.6 294.6 L422.3 296.2 M395.9 300.4 L398.1 298.1 L402.0 297.5 L403.0 299.1 L407.5 299.4 L403.9 301.7 L406.8 302.3 L407.1 304.6 L409.7 304.6 L412.9 302.9 L416.8 302.3 L416.5 301.5 L412.0 301.3 L412.0 299.1 L412.9 298.5 L417.8 297.5 L422.3 296.2 L425.8 295.9 L423.5 297.7 L421.6 299.4 L420.6 300.7 L419.7 301.8 L417.8 301.7 L417.4 302.6 L419.7 303.9 L423.5 305.2 L427.1 307.4 L428.0 308.1 L431.2 309.4 L433.2 311.9 L432.9 314.2 L428.7 316.1 L427.1 315.8 L422.9 316.1 L418.4 315.1 L416.1 314.8 L415.2 313.5 L412.3 312.6 L408.8 312.7 L406.5 312.6 L403.3 313.5 L400.4 314.8 L396.9 315.1 L395.9 315.3 M395.9 331.2 L397.2 331.2 L397.8 329.3 L400.4 329.4 L402.3 330.2 L404.3 331.5 L405.5 331.7 L408.4 330.9 L410.7 329.3 L412.9 329.9 L413.9 329.9 L415.8 329.0 L415.8 329.9 L414.9 331.8 L414.4 333.1 L414.9 335.4 L414.5 336.8 L413.6 338.6 L412.3 341.1 L412.0 342.1 L411.2 344.5 L410.4 346.3 L409.6 346.9 L408.1 347.6 L405.9 347.6 L403.3 347.1 L401.7 346.3 L399.1 346.0 L397.2 346.4 L395.9 347.2 M403.3 335.1 L404.6 336.2 L405.5 336.3 L407.8 335.2 L408.9 335.1 L408.8 334.1 L410.7 332.8 L407.8 333.8 L405.2 333.8 L405.2 334.6 L403.3 335.1 M432.9 314.2 L437.0 313.9 L439.3 315.5 M439.3 315.5 L439.9 316.8 L439.8 318.7 L443.5 320.0 M443.5 320.0 L442.2 320.9 L440.9 320.9 L442.2 324.1 L441.5 325.7 L443.5 328.0 M443.5 328.0 L441.2 327.7 L437.0 327.5 L435.6 328.3 M435.6 328.3 L431.9 328.3 L428.0 329.3 L423.9 329.6 L418.7 329.8 L417.4 329.3 L416.9 330.9 L415.8 332.0 L414.9 332.2 M435.6 328.3 L432.2 330.6 L432.5 333.1 L431.2 337.0 L424.2 340.2 M424.2 340.2 L417.8 343.7 L414.2 342.4 M412.3 341.1 L413.9 340.7 L414.9 340.0 L417.1 337.6 L416.5 336.3 L415.0 336.2 M413.9 340.7 L414.5 341.5 L414.2 342.4 M414.1 342.4 L413.7 343.4 L413.6 346.3 L413.3 347.9 L412.0 352.5 M409.6 346.9 L411.6 352.7 M424.2 340.2 L425.5 344.2 M425.5 344.2 L418.4 346.3 L421.6 349.5 L420.0 351.1 L417.6 351.6 L415.5 353.7 L411.8 353.2 M425.5 344.2 L429.3 345.0 L434.8 347.6 L443.1 353.7 L448.6 354.0 L449.1 354.0 M449.1 354.0 L451.8 351.1 L453.6 351.1 L453.7 351.3 M449.1 354.0 L452.0 354.3 L452.8 355.8 L455.0 355.8 M443.5 328.0 L445.4 331.8 L447.6 332.8 L446.2 335.1 L445.4 338.3 L447.6 341.1 L451.5 343.1 L453.3 345.6 L452.8 347.9 L453.7 349.5 L455.5 351.3 M412.0 352.7 L411.3 357.5 L412.6 357.5 L414.2 359.8 L416.8 363.9 L419.0 367.1 L419.2 369.4 L421.9 370.2 L423.2 371.6 L424.8 374.9 L425.3 378.4 L427.4 382.2 L429.6 384.5 L431.9 387.4 L433.5 390.3 L435.4 392.2 L436.4 394.1 L437.0 394.8 L437.0 398.3 L437.7 400.9 L438.5 404.4 L439.3 406.6 L440.9 407.0 L444.1 406.3 L448.9 404.4 L452.5 402.8 L456.0 402.3 L458.9 399.9 L463.4 398.6 L467.2 397.3 L467.2 395.4 L470.1 394.0 L473.3 392.8 L477.2 391.2 L480.4 389.8 L481.4 387.7 L484.9 386.6 L485.2 382.6 L487.5 381.9 L488.8 379.7 L490.4 378.4 L491.7 375.2 L489.1 373.6 L487.8 371.6 L483.6 370.7 L481.4 368.8 L480.4 367.1 L480.6 365.2 L480.7 363.3 L479.8 363.8 L479.5 364.9 L477.2 366.2 L474.3 368.8 L471.4 370.0 L468.5 369.7 L465.3 369.7 L464.7 368.4 L465.3 366.5 L465.0 364.3 L464.0 363.5 L462.7 365.5 L462.7 368.0 L460.8 365.9 L460.8 363.3 L459.9 361.4 L457.6 359.1 L456.0 357.5 L455.0 355.8 L454.1 354.3 L453.4 353.0 L454.4 352.5 L453.7 351.3 L455.5 351.3 L456.6 350.0 L458.9 350.9 L460.5 350.5 L462.7 354.0 L465.0 358.0 L468.5 359.4 L471.1 361.7 L475.3 362.3 L478.2 361.4 L480.4 360.2 L482.7 361.4 L483.6 364.6 L485.2 365.2 L489.1 365.9 L494.2 366.2 L497.5 366.5 L499.7 366.7 L503.6 366.3 L507.1 366.5 L510.6 366.0 L513.2 365.9 L513.8 367.5 L516.1 370.4 L518.7 371.3 L519.9 372.9 L523.2 374.2 L525.4 373.7 L521.6 375.8 L523.2 378.1 L525.7 380.5 L527.7 381.0 L531.2 379.3 L531.8 378.1 L532.8 375.8 L533.4 377.7 L533.1 379.7 L533.4 386.4 L535.1 392.8 L536.7 397.6 L538.6 401.5 L539.9 406.0 L543.1 411.3 L544.4 415.3 L544.7 416.9 M437.0 394.8 L438.3 393.8 L439.0 391.5 L441.5 391.5 L445.4 391.9 L448.6 392.2 L449.7 391.9 L450.5 393.0 L452.1 392.5 L454.4 389.0 L457.3 387.7 L466.6 386.4 M466.6 386.4 L470.1 394.0 M466.6 386.4 L476.2 383.2 L478.3 376.8 L476.9 374.5 M476.9 374.5 L468.5 373.7 L465.3 369.7 M476.9 374.5 L478.8 370.4 L478.8 367.5 L479.8 367.5 L480.6 367.3 M479.5 364.9 L480.4 365.2 M462.7 368.0 L464.0 368.4 L464.7 368.4 M457.6 298.8 L460.2 297.5 L464.0 296.4 L468.2 296.7 L470.1 297.5 L469.8 302.0 L464.4 302.3 L463.4 304.2 L461.1 305.2 L463.4 308.7 L467.6 310.0 L468.8 313.2 L468.0 313.4 L469.5 315.5 L469.8 319.0 L472.7 320.6 L470.5 321.6 L472.7 327.5 L472.7 328.8 L466.6 329.9 L463.4 329.6 L460.8 327.3 L457.0 327.0 L456.6 324.1 L457.6 321.6 L458.2 318.4 L461.1 317.7 L458.9 316.8 L457.3 314.8 L455.7 313.1 L453.1 310.3 L452.1 309.4 L451.8 306.8 L449.6 304.6 L451.5 301.0 L453.7 299.7 L457.6 298.8 M469.5 315.1 L470.8 312.9 L473.7 311.6 L475.6 313.2 L475.3 315.8 L473.0 316.8 L470.5 316.4 L469.5 315.1 M428.0 308.1 L431.2 308.1 L436.1 308.7 L440.2 310.7 L443.8 310.2 L446.4 311.0 L448.8 312.9 M448.8 312.9 L451.5 314.8 L453.4 315.1 L455.7 313.1 M448.8 312.9 L448.0 315.1 L449.2 315.5 L444.1 315.0 M444.1 315.0 L439.3 315.5 M444.1 315.0 L446.0 316.4 L447.0 318.4 L448.9 320.6 L448.9 322.5 M443.5 320.0 L445.6 322.2 L448.9 322.5 L450.5 321.6 L453.7 320.0 L454.9 320.9 L453.6 322.9 L456.6 324.1 M443.5 320.0 L446.7 320.6 L447.6 322.5 M472.7 327.5 L475.6 327.3 L477.5 325.4 L480.4 325.1 L483.6 324.8 L487.2 326.7 L490.1 327.0 L493.6 329.9 L495.8 329.8 L496.4 333.1 M496.4 333.1 L495.8 336.3 L493.9 337.9 L493.9 339.2 L495.2 339.9 L494.2 341.5 L495.0 346.3 L497.8 346.6 L498.1 348.4 L495.0 351.6 M495.0 351.6 L498.1 355.4 L501.3 356.7 L501.3 359.9 L502.9 360.1 L502.6 361.9 L498.3 363.1 L497.5 366.5 M495.0 351.6 L500.3 353.0 L505.5 353.0 L512.6 351.6 L512.9 348.2 L517.1 346.9 L518.7 345.3 L522.2 345.0 L522.2 341.5 L525.4 340.5 L524.1 338.3 L528.0 337.0 L528.3 335.1 L529.6 331.8 L529.3 330.6 L534.1 329.1 L538.9 328.6 L540.2 327.8 M496.4 333.1 L499.7 334.1 L502.6 332.3 L506.8 330.9 L507.7 328.3 L513.4 327.5 M513.4 327.5 L517.4 328.0 M517.4 328.0 L518.0 328.6 L522.2 328.3 L525.1 326.7 L525.4 324.8 L528.6 324.5 L529.6 325.7 L529.3 329.3 L533.1 328.6 L535.1 327.2 L540.2 327.8 M513.4 327.5 L513.5 325.4 L510.3 324.5 L505.8 322.4 L500.0 319.0 L498.4 315.5 L492.6 314.5 L492.6 311.9 L487.8 310.0 L485.2 311.9 L482.5 313.1 L483.0 314.8 L479.5 314.8 M479.5 314.8 L477.7 314.8 L475.4 312.4 L473.3 311.5 L469.8 312.3 L468.0 313.4 M479.5 314.8 L479.5 302.9 L487.8 301.0 L495.8 304.9 L498.7 307.8 L508.1 307.1 L511.9 309.4 L511.6 311.3 L513.2 312.6 L513.8 315.1 L517.7 315.3 L518.3 316.8 L521.2 314.5 L525.1 312.6 L527.6 311.8 M527.6 311.8 L528.3 310.0 L535.7 311.3 L536.0 309.2 L538.3 308.7 L543.1 309.5 L549.2 309.7 L554.0 310.0 L557.4 311.9 M557.4 311.9 L557.2 309.7 L559.2 308.7 L557.9 304.2 L556.6 302.9 L564.6 302.3 L564.0 301.0 L566.2 295.9 L574.3 296.4 L574.9 292.0 L577.8 291.6 L580.0 289.8 M557.4 311.9 L551.8 314.8 L546.6 315.8 L545.0 317.7 L539.9 317.6 L536.7 319.3 L536.2 320.8 M536.2 320.8 L537.0 323.8 L540.2 324.1 L540.2 327.8 M527.6 311.8 L525.7 314.2 L528.9 315.5 L531.5 315.8 L534.4 316.4 L530.9 318.0 L526.4 318.4 L526.5 319.2 M526.5 319.2 L522.8 320.4 L530.2 321.2 L536.2 320.8 M526.5 319.2 L526.1 317.9 L524.4 316.4 L522.2 316.8 L519.9 318.4 L519.3 320.6 L516.1 321.6 L518.3 323.8 L518.0 325.7 L517.4 328.0 M580.0 289.8 L578.4 287.5 L573.6 288.2 L569.4 285.0 L567.5 283.7 L561.4 284.3 L556.9 284.3 L558.8 282.7 L553.4 280.5 L549.8 276.3 L545.3 274.1 L546.3 272.8 L538.6 275.7 L535.4 274.4 L535.1 274.1 L528.3 273.4 L527.7 270.5 L521.2 269.6 L518.7 270.9 L509.0 272.9 L496.2 274.4 L495.2 278.6 L492.3 280.8 L497.5 282.7 L496.8 284.3 L492.0 284.2 L490.7 285.1 L486.8 283.4 L481.1 283.5 L478.5 285.0 L474.6 283.7 L468.5 282.1 L462.7 281.3 L456.0 285.0 L455.7 287.2 L452.1 285.5 L449.9 289.0 L450.5 289.5 L448.9 292.0 L451.8 294.0 L454.4 294.3 L457.0 298.1 L455.7 298.0 L457.6 298.8 M581.6 289.6 L587.8 287.2 L596.4 284.3 L602.5 285.1 L612.2 287.7 L615.4 285.3 L614.4 282.1 L617.3 280.2 L627.9 282.7 L628.2 285.0 L632.7 286.4 L638.2 285.5 L642.4 285.9 L648.2 289.0 L655.2 289.6 L662.0 288.5 L666.8 286.1 L674.5 287.4 M580.0 289.8 L581.6 289.6 M674.5 287.4 L672.3 290.8 L670.7 293.6 L675.2 293.6 L676.8 294.4 L680.3 293.3 L684.2 295.9 L684.8 297.5 L679.7 297.5 L676.8 298.5 L674.2 298.8 L671.3 301.3 L667.5 301.7 L664.6 303.6 L659.1 302.6 L657.5 304.9 L659.1 307.1 L654.3 310.0 L650.7 311.1 L643.4 313.2 L636.9 313.9 L627.3 311.9 L620.9 310.5 L609.3 310.3 L606.1 305.2 L600.0 302.9 L591.6 302.3 L591.0 296.5 L587.4 293.3 L582.3 291.4 L581.6 289.6 M719.4 311.3 L719.2 309.7 L721.1 307.8 L721.4 306.0 L720.8 303.3 L723.4 302.0 L727.2 302.6 L728.5 301.0 L730.4 296.5 L732.5 292.4 L731.4 292.0 L727.2 293.0 L725.3 294.3 L720.5 294.3 L719.2 293.0 L719.2 290.4 L716.0 289.1 L710.8 288.2 L709.2 287.5 L708.6 285.9 L707.3 283.4 L705.7 279.8 L702.8 277.1 L696.7 275.5 L688.3 276.3 L685.1 277.9 L687.4 278.9 L685.4 281.4 L682.9 285.8 L682.6 286.9 L678.1 288.5 L674.5 287.4 M518.7 371.3 L520.6 369.4 L527.7 369.1 L526.4 364.9 L524.8 362.0 L522.8 360.7 L525.7 357.5 L530.6 357.7 L533.8 354.3 L535.4 351.3 L539.2 347.6 L538.9 344.7 L541.5 343.7 L539.2 342.1 L537.3 340.8 L537.0 338.3 L538.3 336.0 L543.7 336.0 L549.5 333.4 M540.2 327.8 L543.4 329.9 L549.5 333.4 M549.5 333.4 L550.5 335.1 L553.0 337.3 L552.7 339.9 L555.0 342.8 L551.8 343.1 L552.1 346.9 L555.6 348.2 L560.1 350.5 M556.9 355.0 L558.2 352.1 L560.1 350.5 L561.4 349.8 L564.0 350.8 L567.2 352.9 L570.1 354.8 L572.6 355.6 L575.2 356.9 L578.9 357.7 L582.6 357.8 L582.8 359.3 L582.3 362.7 L579.7 362.7 L575.9 362.0 L573.5 361.5 L571.5 360.1 L567.2 359.6 L562.7 357.8 L560.0 356.2 L556.9 355.0 M582.6 357.8 L584.9 357.2 L585.2 359.8 M585.2 359.8 L587.8 356.9 L591.0 357.2 L594.2 358.2 L595.5 359.3 L595.1 361.2 L592.6 361.4 L590.0 361.1 L587.8 361.7 L585.0 361.2 L585.2 359.8 M595.1 361.2 L598.4 361.1 L601.3 360.7 L603.5 359.1 L606.4 357.5 L609.9 356.6 L612.3 356.7 M585.8 377.4 L585.2 373.9 L584.2 371.6 L582.6 368.8 L583.3 367.1 L585.2 366.2 L582.6 364.6 L583.7 362.5 L585.5 363.0 L588.1 363.9 L588.2 366.2 L591.6 366.7 L595.1 366.5 L596.4 367.1 L595.8 368.8 L592.6 370.0 L592.6 372.0 L593.9 373.7 L594.8 371.6 L596.1 371.3 L597.1 376.8 M597.1 376.8 L597.4 379.0 L596.1 381.0 M597.1 376.8 L598.7 376.1 L599.3 373.6 L599.5 370.4 L601.9 370.8 L603.8 367.1 L603.5 366.5 L605.4 363.9 L605.1 362.0 L608.3 360.1 L611.2 360.4 L611.5 358.2 L612.3 356.7 M612.3 356.7 L614.1 356.6 L615.2 358.3 L616.7 359.1 L616.7 361.5 L616.7 364.3 L613.5 366.8 L613.1 370.7 L616.7 370.2 L617.3 373.1 L619.4 373.7 L618.4 376.5 L620.7 376.6 L622.1 378.2 L624.6 377.3 L624.6 378.6 M624.6 378.6 L621.8 380.6 L621.2 382.1 M621.2 382.1 L619.2 382.6 L617.5 384.0 L615.2 384.2 L613.8 387.7 L612.5 388.2 L613.9 391.1 L617.3 395.4 L616.2 398.3 L615.1 398.9 L615.7 400.5 L618.0 403.1 L618.3 404.7 L618.3 407.0 L619.6 409.2 L617.6 412.3 L616.2 415.5 M621.2 382.1 L622.8 382.9 L622.6 384.8 L625.0 385.0 L624.1 388.3 L624.2 391.2 L627.6 389.3 L630.5 389.6 L633.7 388.7 L636.0 391.4 L636.3 394.6 L638.9 397.3 L637.6 401.5 M637.6 401.5 L634.7 401.2 L632.1 401.2 L630.3 401.8 L628.4 404.4 L629.2 408.2 L630.2 410.0 M637.6 401.5 L640.1 402.8 L641.7 400.7 L645.1 400.2 M645.1 400.2 L645.3 404.1 L645.0 407.8 L639.5 410.3 L640.9 412.3 L637.6 412.4 L635.2 414.0 M645.1 400.2 L644.6 398.6 L644.3 396.4 L641.9 394.1 L639.8 391.2 L637.2 387.5 L633.4 385.4 L636.3 383.5 L635.0 380.8 L631.1 380.8 L629.7 377.7 L627.8 375.3 M624.6 378.6 L626.6 379.5 L626.2 375.8 L627.8 375.3 M627.8 375.3 L629.5 374.5 L632.1 374.5 L635.3 373.7 L637.9 372.4 L639.5 373.7 L642.4 374.2 L641.9 376.1 L643.4 377.4 L646.7 378.2 M556.3 416.9 L556.1 414.3 L555.9 412.1 L556.1 408.9 L557.5 405.3 L556.9 400.9 L556.7 398.6 L559.2 396.7 L560.4 395.1 L564.0 394.1 L567.2 390.6 L572.3 386.1 L575.2 383.8 L578.4 381.6 L579.1 378.7 L581.6 377.7 L582.9 378.1 L585.8 377.4 L588.7 377.1 L590.6 375.8 L592.9 374.9 L594.5 375.8 L595.1 378.7 L596.1 381.0 L598.0 382.9 L600.3 385.4 L602.5 388.3 L603.2 391.9 L602.5 396.0 L605.8 396.8 L608.6 394.8 L610.9 392.8 L611.9 394.1 L613.1 394.4 L613.5 398.6 L614.7 402.5 L616.4 407.6 L616.4 409.8 L616.7 414.3 L616.0 416.9 M597.7 404.1 L598.4 406.0 L597.4 408.9 L597.6 410.5 M596.8 412.4 L596.9 413.7 M618.3 416.9 L618.6 413.4 L619.6 411.4 L620.5 408.2 L620.9 405.7 L621.8 404.1 L622.6 404.1 L623.9 404.4 L623.7 406.8 L626.3 406.8 L628.2 408.2 L630.2 410.0 L630.8 412.1 L632.4 413.7 L635.2 414.0 L636.3 415.3 L636.6 416.9 M642.1 416.9 L642.7 414.3 L643.7 414.2 L645.3 413.7 L647.5 412.1 L649.8 410.8 L650.4 408.2 L650.7 405.7 L650.4 403.1 L649.5 398.6 L647.5 395.7 L645.3 394.1 L642.1 391.2 L641.4 389.3 L639.5 387.1 L639.8 383.5 L642.1 381.6 L642.7 380.3 L644.6 380.0 L646.7 378.2 L648.5 377.7 L650.1 378.4 L652.0 378.4 L651.7 380.3 L652.7 382.2 L654.6 381.6 L654.3 379.3 L656.2 378.4 L658.8 377.7 L662.0 377.3 L664.2 376.1 L666.2 375.8 L668.4 374.5 L671.0 374.4 L673.9 373.6 L674.5 372.4 L677.4 371.0 L679.0 368.9 L680.9 367.5 L682.9 365.9 L683.8 363.9 L684.8 362.0 L686.1 360.1 L687.4 357.5 L690.3 356.6 L690.3 353.7 L691.2 351.4 L689.0 350.1 L688.0 350.1 L689.3 348.9 L691.2 348.2 L691.1 346.6 L689.3 345.3 L691.2 345.6 L689.6 343.4 L688.0 341.5 L686.1 337.3 L682.6 335.7 L682.6 335.1 L683.8 333.8 L686.1 331.8 L688.0 330.2 L690.3 329.3 L693.2 329.0 L693.8 327.3 L691.9 327.0 L689.6 326.9 L687.7 326.1 L684.8 327.7 L681.9 328.0 L681.6 326.7 L682.6 326.1 L680.3 325.1 L677.7 323.5 L677.7 321.9 L679.7 322.0 L681.9 321.6 L683.8 319.3 L688.0 317.1 L689.6 316.1 L691.2 316.1 L692.2 317.6 L689.9 320.3 L689.3 322.2 L689.0 323.0 L691.2 322.2 L693.2 320.9 L696.4 319.8 L699.1 319.2 L700.6 320.3 L702.2 320.6 L701.5 323.5 L700.6 325.1 L702.2 326.2 L704.7 326.2 L706.3 326.7 L706.7 328.8 L705.1 329.3 L706.0 331.5 L706.3 333.1 L705.4 335.1 L705.5 336.3 L706.3 337.3 L708.9 336.5 L710.2 335.9 L712.4 335.5 L714.4 334.7 L715.5 333.4 L715.7 331.7 L715.3 328.6 L714.0 326.4 L712.4 324.5 L712.0 323.5 L710.2 321.6 L709.2 320.9 L709.6 319.5 L712.4 318.4 L716.3 316.3 L716.6 314.2 L718.2 311.9 L719.4 311.5 L721.1 310.7 L723.4 309.0 L724.7 308.4 L726.6 310.0 L727.5 310.0 L730.1 309.4 L734.0 307.1 L736.5 304.6 L739.4 302.0 L743.0 298.1 L744.9 295.6 L747.2 293.0 L750.0 291.4 M699.1 319.2 L701.2 317.4 L704.4 315.8 L707.3 313.4 L710.5 314.3 L711.2 312.6 L714.0 312.3 L716.3 311.1 L717.3 309.4 L719.4 311.3 M704.7 326.2 L706.7 325.6 L708.3 324.5 L712.0 323.5 M704.9 340.5 L706.0 339.7 L707.5 339.9 L706.3 340.8 L704.9 340.5 M750.0 261.9 L743.6 266.4 L739.8 268.9 L734.3 271.8 L739.1 272.1 L740.7 273.7 L742.0 275.0 L745.2 273.4 L748.8 273.4 L750.0 274.1 M741.4 270.5 L743.3 270.5 L743.3 271.5 L741.7 271.5 L741.4 270.5 M750.0 310.7 L748.8 311.6 L749.1 313.5 L750.0 314.2 M750.0 320.0 L748.4 319.2 L749.1 321.2 L748.8 322.9 L747.8 324.1 L746.2 325.7 L744.6 327.7 L743.6 328.1 L740.7 329.4 L739.8 328.3 L740.9 327.0 L738.8 327.7 L738.8 329.3 L737.2 331.2 L736.5 332.8 L734.9 333.3 L734.0 332.6 L731.1 333.3 L727.9 333.4 L725.6 333.6 L723.7 335.4 L721.8 336.8 L720.2 337.3 L720.2 338.4 L722.1 338.3 L724.7 338.6 L725.3 337.3 L728.5 337.0 L730.1 336.3 L732.4 335.9 L734.0 336.2 L734.8 336.3 L733.7 337.3 L733.7 338.6 L734.6 339.5 L735.7 340.0 L737.5 338.3 L739.4 337.0 L738.5 336.0 L738.8 335.1 L739.8 336.0 L740.7 336.3 L743.6 336.3 L745.2 334.7 L745.9 336.2 L746.8 334.4 L748.4 334.1 L748.8 335.2 L750.0 334.7 M723.7 340.3 L725.9 338.6 L726.9 338.1 L728.8 338.3 L730.3 337.1 L732.2 337.6 L732.5 338.9 L730.8 340.7 L728.7 339.9 L726.9 342.3 L725.3 341.5 L725.0 340.2 L723.7 340.3 M720.2 338.4 L722.7 339.5 L723.4 340.7 L723.4 342.1 L722.7 343.4 L721.8 346.0 L720.8 346.9 L719.5 347.9 L719.2 346.0 L717.9 347.1 L717.9 344.4 L719.2 342.8 L717.9 342.8 L716.6 342.8 L716.3 341.1 L716.9 339.9 L718.5 339.5 L720.2 338.4 M714.7 337.6 L715.5 336.2 M727.5 331.2 L728.0 330.9 M743.6 325.9 L744.6 324.5 L744.7 325.6 L743.6 325.9 M688.3 367.0 L690.3 366.2 L691.6 367.1 L691.1 368.8 L690.3 370.4 L689.6 372.9 L688.0 375.8 L687.9 377.1 L687.1 375.7 L685.8 373.9 L685.4 372.0 L687.4 368.4 L688.3 367.0 M648.7 385.4 L650.4 383.7 L652.0 383.2 L654.9 382.9 L656.2 384.3 L654.6 387.1 L653.0 388.3 L651.4 389.0 L648.8 388.0 L648.7 385.4 M709.7 363.6 L711.8 361.2 M715.0 356.7 L716.3 355.9 M713.7 358.5 L714.0 358.0 M702.0 368.0 L702.6 367.6 M697.0 369.4 L698.9 368.8 M718.5 350.1 L719.4 349.8 M720.2 349.8 L720.6 348.5 M687.1 388.0 L688.3 387.7 L692.0 388.0 L692.5 391.9 L693.2 392.8 L692.2 395.1 L690.3 396.4 L690.3 399.2 L690.6 401.5 L692.2 402.8 L693.8 401.5 L695.7 402.5 L698.0 403.1 L698.3 407.1 L695.7 405.7 L693.5 405.0 L693.2 402.8 L690.6 402.6 L689.3 403.7 L687.1 403.1 L687.1 401.2 L688.2 400.5 L686.9 401.0 L685.9 399.9 L685.3 398.3 L684.6 395.1 L686.1 395.9 L686.3 394.1 L686.6 391.2 L687.1 388.0 M686.1 404.1 L688.3 404.4 L689.9 405.3 L689.9 407.9 L688.7 408.2 L687.7 406.6 L686.1 404.1 M698.9 407.1 L702.2 407.1 L702.8 409.2 L703.4 411.4 L701.2 411.8 L700.6 410.5 L698.9 407.1 M698.9 410.5 L701.2 411.4 L701.8 414.7 L700.6 415.3 L700.2 412.4 L698.9 410.5 M691.6 409.2 L695.1 410.3 L693.5 413.9 L691.2 413.9 L691.6 409.2 M695.4 407.1 L698.0 408.9 L696.7 409.2 L695.4 407.1 M694.4 416.9 L694.4 414.0 L695.7 412.3 L696.5 412.7 L695.4 415.6 L695.7 416.9 M696.1 416.6 L698.0 411.1 L698.1 413.4 L696.7 416.6 M680.9 416.9 L682.9 413.4 L683.5 410.8 L684.2 413.7 L682.6 416.9 M684.8 407.9 L686.1 408.9 L685.1 409.5 L684.8 407.9 M404.1 351.3 L403.5 352.4 L404.4 354.6 L406.2 357.5 L407.5 359.1 L408.4 360.7 L409.7 363.6 L411.6 367.1 L413.6 370.5 L413.9 372.0 L415.8 374.7 L418.1 376.8 L419.0 380.0 L418.7 384.5 L419.7 386.9 L423.5 389.6 L425.5 394.4 L426.4 397.3 L428.0 399.2 L430.6 400.2 L433.5 402.8 L435.7 405.0 L438.0 406.6 L438.6 407.6 L438.6 409.0 L437.0 410.3 L438.2 410.3 L438.5 410.6 L441.2 413.9 L442.8 414.0 L446.0 413.1 L449.2 412.7 L452.1 411.6 L456.6 411.3 L460.5 410.5 L462.7 409.0 L464.4 409.4 L463.7 411.8 L463.9 413.9 L463.1 416.9 M404.1 351.3 L404.6 352.4 L406.2 355.6 L407.5 356.6 L409.6 358.3 L410.2 357.5 L410.7 354.6 L411.6 352.7 M395.9 376.8 L418.1 376.8 M423.5 389.6 L422.9 389.9 L418.4 392.7 L416.6 399.2 L416.9 401.6 M416.9 401.6 L415.7 406.6 L412.3 409.5 L411.8 412.6 L409.7 413.5 L409.4 416.9 M416.9 401.6 L420.3 401.8 L421.3 399.6 L423.2 400.9 L425.1 400.2 L428.0 400.9 L430.9 402.1 L435.7 407.4 M435.7 407.4 L433.8 409.8 L433.7 411.9 L437.0 412.3 L437.5 412.2 M437.5 412.2 L438.5 410.6 M435.7 407.4 L438.0 406.6 M437.5 412.2 L437.0 414.3 L437.7 416.9 M470.8 407.3 L473.0 406.6 L474.6 407.1 L472.4 407.9 L470.8 407.3" fill="none" stroke="#020a08" stroke-width="0.92" stroke-linejoin="round" stroke-linecap="round"/>
<path d="M395.9 268.3 L398.8 268.9 L398.5 271.2 L400.1 273.4 L404.6 276.0 L402.6 276.9 L400.4 276.6 L401.7 280.2 M401.7 280.2 L398.8 280.5 L397.8 282.7 L395.9 282.1 M401.7 280.2 L406.2 279.2 L410.0 281.1 L409.4 282.7 L413.3 285.0 L417.1 285.9 L420.0 285.6 L421.6 287.2 L428.4 288.2 L427.1 291.4 L427.7 293.6 L422.6 294.6 L422.3 296.2 M395.9 300.4 L398.1 298.1 L402.0 297.5 L403.0 299.1 L407.5 299.4 L403.9 301.7 L406.8 302.3 L407.1 304.6 L409.7 304.6 L412.9 302.9 L416.8 302.3 L416.5 301.5 L412.0 301.3 L412.0 299.1 L412.9 298.5 L417.8 297.5 L422.3 296.2 L425.8 295.9 L423.5 297.7 L421.6 299.4 L420.6 300.7 L419.7 301.8 L417.8 301.7 L417.4 302.6 L419.7 303.9 L423.5 305.2 L427.1 307.4 L428.0 308.1 L431.2 309.4 L433.2 311.9 L432.9 314.2 L428.7 316.1 L427.1 315.8 L422.9 316.1 L418.4 315.1 L416.1 314.8 L415.2 313.5 L412.3 312.6 L408.8 312.7 L406.5 312.6 L403.3 313.5 L400.4 314.8 L396.9 315.1 L395.9 315.3 M395.9 331.2 L397.2 331.2 L397.8 329.3 L400.4 329.4 L402.3 330.2 L404.3 331.5 L405.5 331.7 L408.4 330.9 L410.7 329.3 L412.9 329.9 L413.9 329.9 L415.8 329.0 L415.8 329.9 L414.9 331.8 L414.4 333.1 L414.9 335.4 L414.5 336.8 L413.6 338.6 L412.3 341.1 L412.0 342.1 L411.2 344.5 L410.4 346.3 L409.6 346.9 L408.1 347.6 L405.9 347.6 L403.3 347.1 L401.7 346.3 L399.1 346.0 L397.2 346.4 L395.9 347.2 M403.3 335.1 L404.6 336.2 L405.5 336.3 L407.8 335.2 L408.9 335.1 L408.8 334.1 L410.7 332.8 L407.8 333.8 L405.2 333.8 L405.2 334.6 L403.3 335.1 M432.9 314.2 L437.0 313.9 L439.3 315.5 M439.3 315.5 L439.9 316.8 L439.8 318.7 L443.5 320.0 M443.5 320.0 L442.2 320.9 L440.9 320.9 L442.2 324.1 L441.5 325.7 L443.5 328.0 M443.5 328.0 L441.2 327.7 L437.0 327.5 L435.6 328.3 M435.6 328.3 L431.9 328.3 L428.0 329.3 L423.9 329.6 L418.7 329.8 L417.4 329.3 L416.9 330.9 L415.8 332.0 L414.9 332.2 M435.6 328.3 L432.2 330.6 L432.5 333.1 L431.2 337.0 L424.2 340.2 M424.2 340.2 L417.8 343.7 L414.2 342.4 M412.3 341.1 L413.9 340.7 L414.9 340.0 L417.1 337.6 L416.5 336.3 L415.0 336.2 M413.9 340.7 L414.5 341.5 L414.2 342.4 M414.1 342.4 L413.7 343.4 L413.6 346.3 L413.3 347.9 L412.0 352.5 M409.6 346.9 L411.6 352.7 M424.2 340.2 L425.5 344.2 M425.5 344.2 L418.4 346.3 L421.6 349.5 L420.0 351.1 L417.6 351.6 L415.5 353.7 L411.8 353.2 M425.5 344.2 L429.3 345.0 L434.8 347.6 L443.1 353.7 L448.6 354.0 L449.1 354.0 M449.1 354.0 L451.8 351.1 L453.6 351.1 L453.7 351.3 M449.1 354.0 L452.0 354.3 L452.8 355.8 L455.0 355.8 M443.5 328.0 L445.4 331.8 L447.6 332.8 L446.2 335.1 L445.4 338.3 L447.6 341.1 L451.5 343.1 L453.3 345.6 L452.8 347.9 L453.7 349.5 L455.5 351.3 M412.0 352.7 L411.3 357.5 L412.6 357.5 L414.2 359.8 L416.8 363.9 L419.0 367.1 L419.2 369.4 L421.9 370.2 L423.2 371.6 L424.8 374.9 L425.3 378.4 L427.4 382.2 L429.6 384.5 L431.9 387.4 L433.5 390.3 L435.4 392.2 L436.4 394.1 L437.0 394.8 L437.0 398.3 L437.7 400.9 L438.5 404.4 L439.3 406.6 L440.9 407.0 L444.1 406.3 L448.9 404.4 L452.5 402.8 L456.0 402.3 L458.9 399.9 L463.4 398.6 L467.2 397.3 L467.2 395.4 L470.1 394.0 L473.3 392.8 L477.2 391.2 L480.4 389.8 L481.4 387.7 L484.9 386.6 L485.2 382.6 L487.5 381.9 L488.8 379.7 L490.4 378.4 L491.7 375.2 L489.1 373.6 L487.8 371.6 L483.6 370.7 L481.4 368.8 L480.4 367.1 L480.6 365.2 L480.7 363.3 L479.8 363.8 L479.5 364.9 L477.2 366.2 L474.3 368.8 L471.4 370.0 L468.5 369.7 L465.3 369.7 L464.7 368.4 L465.3 366.5 L465.0 364.3 L464.0 363.5 L462.7 365.5 L462.7 368.0 L460.8 365.9 L460.8 363.3 L459.9 361.4 L457.6 359.1 L456.0 357.5 L455.0 355.8 L454.1 354.3 L453.4 353.0 L454.4 352.5 L453.7 351.3 L455.5 351.3 L456.6 350.0 L458.9 350.9 L460.5 350.5 L462.7 354.0 L465.0 358.0 L468.5 359.4 L471.1 361.7 L475.3 362.3 L478.2 361.4 L480.4 360.2 L482.7 361.4 L483.6 364.6 L485.2 365.2 L489.1 365.9 L494.2 366.2 L497.5 366.5 L499.7 366.7 L503.6 366.3 L507.1 366.5 L510.6 366.0 L513.2 365.9 L513.8 367.5 L516.1 370.4 L518.7 371.3 L519.9 372.9 L523.2 374.2 L525.4 373.7 L521.6 375.8 L523.2 378.1 L525.7 380.5 L527.7 381.0 L531.2 379.3 L531.8 378.1 L532.8 375.8 L533.4 377.7 L533.1 379.7 L533.4 386.4 L535.1 392.8 L536.7 397.6 L538.6 401.5 L539.9 406.0 L543.1 411.3 L544.4 415.3 L544.7 416.9 M437.0 394.8 L438.3 393.8 L439.0 391.5 L441.5 391.5 L445.4 391.9 L448.6 392.2 L449.7 391.9 L450.5 393.0 L452.1 392.5 L454.4 389.0 L457.3 387.7 L466.6 386.4 M466.6 386.4 L470.1 394.0 M466.6 386.4 L476.2 383.2 L478.3 376.8 L476.9 374.5 M476.9 374.5 L468.5 373.7 L465.3 369.7 M476.9 374.5 L478.8 370.4 L478.8 367.5 L479.8 367.5 L480.6 367.3 M479.5 364.9 L480.4 365.2 M462.7 368.0 L464.0 368.4 L464.7 368.4 M457.6 298.8 L460.2 297.5 L464.0 296.4 L468.2 296.7 L470.1 297.5 L469.8 302.0 L464.4 302.3 L463.4 304.2 L461.1 305.2 L463.4 308.7 L467.6 310.0 L468.8 313.2 L468.0 313.4 L469.5 315.5 L469.8 319.0 L472.7 320.6 L470.5 321.6 L472.7 327.5 L472.7 328.8 L466.6 329.9 L463.4 329.6 L460.8 327.3 L457.0 327.0 L456.6 324.1 L457.6 321.6 L458.2 318.4 L461.1 317.7 L458.9 316.8 L457.3 314.8 L455.7 313.1 L453.1 310.3 L452.1 309.4 L451.8 306.8 L449.6 304.6 L451.5 301.0 L453.7 299.7 L457.6 298.8 M469.5 315.1 L470.8 312.9 L473.7 311.6 L475.6 313.2 L475.3 315.8 L473.0 316.8 L470.5 316.4 L469.5 315.1 M428.0 308.1 L431.2 308.1 L436.1 308.7 L440.2 310.7 L443.8 310.2 L446.4 311.0 L448.8 312.9 M448.8 312.9 L451.5 314.8 L453.4 315.1 L455.7 313.1 M448.8 312.9 L448.0 315.1 L449.2 315.5 L444.1 315.0 M444.1 315.0 L439.3 315.5 M444.1 315.0 L446.0 316.4 L447.0 318.4 L448.9 320.6 L448.9 322.5 M443.5 320.0 L445.6 322.2 L448.9 322.5 L450.5 321.6 L453.7 320.0 L454.9 320.9 L453.6 322.9 L456.6 324.1 M443.5 320.0 L446.7 320.6 L447.6 322.5 M472.7 327.5 L475.6 327.3 L477.5 325.4 L480.4 325.1 L483.6 324.8 L487.2 326.7 L490.1 327.0 L493.6 329.9 L495.8 329.8 L496.4 333.1 M496.4 333.1 L495.8 336.3 L493.9 337.9 L493.9 339.2 L495.2 339.9 L494.2 341.5 L495.0 346.3 L497.8 346.6 L498.1 348.4 L495.0 351.6 M495.0 351.6 L498.1 355.4 L501.3 356.7 L501.3 359.9 L502.9 360.1 L502.6 361.9 L498.3 363.1 L497.5 366.5 M495.0 351.6 L500.3 353.0 L505.5 353.0 L512.6 351.6 L512.9 348.2 L517.1 346.9 L518.7 345.3 L522.2 345.0 L522.2 341.5 L525.4 340.5 L524.1 338.3 L528.0 337.0 L528.3 335.1 L529.6 331.8 L529.3 330.6 L534.1 329.1 L538.9 328.6 L540.2 327.8 M496.4 333.1 L499.7 334.1 L502.6 332.3 L506.8 330.9 L507.7 328.3 L513.4 327.5 M513.4 327.5 L517.4 328.0 M517.4 328.0 L518.0 328.6 L522.2 328.3 L525.1 326.7 L525.4 324.8 L528.6 324.5 L529.6 325.7 L529.3 329.3 L533.1 328.6 L535.1 327.2 L540.2 327.8 M513.4 327.5 L513.5 325.4 L510.3 324.5 L505.8 322.4 L500.0 319.0 L498.4 315.5 L492.6 314.5 L492.6 311.9 L487.8 310.0 L485.2 311.9 L482.5 313.1 L483.0 314.8 L479.5 314.8 M479.5 314.8 L477.7 314.8 L475.4 312.4 L473.3 311.5 L469.8 312.3 L468.0 313.4 M479.5 314.8 L479.5 302.9 L487.8 301.0 L495.8 304.9 L498.7 307.8 L508.1 307.1 L511.9 309.4 L511.6 311.3 L513.2 312.6 L513.8 315.1 L517.7 315.3 L518.3 316.8 L521.2 314.5 L525.1 312.6 L527.6 311.8 M527.6 311.8 L528.3 310.0 L535.7 311.3 L536.0 309.2 L538.3 308.7 L543.1 309.5 L549.2 309.7 L554.0 310.0 L557.4 311.9 M557.4 311.9 L557.2 309.7 L559.2 308.7 L557.9 304.2 L556.6 302.9 L564.6 302.3 L564.0 301.0 L566.2 295.9 L574.3 296.4 L574.9 292.0 L577.8 291.6 L580.0 289.8 M557.4 311.9 L551.8 314.8 L546.6 315.8 L545.0 317.7 L539.9 317.6 L536.7 319.3 L536.2 320.8 M536.2 320.8 L537.0 323.8 L540.2 324.1 L540.2 327.8 M527.6 311.8 L525.7 314.2 L528.9 315.5 L531.5 315.8 L534.4 316.4 L530.9 318.0 L526.4 318.4 L526.5 319.2 M526.5 319.2 L522.8 320.4 L530.2 321.2 L536.2 320.8 M526.5 319.2 L526.1 317.9 L524.4 316.4 L522.2 316.8 L519.9 318.4 L519.3 320.6 L516.1 321.6 L518.3 323.8 L518.0 325.7 L517.4 328.0 M580.0 289.8 L578.4 287.5 L573.6 288.2 L569.4 285.0 L567.5 283.7 L561.4 284.3 L556.9 284.3 L558.8 282.7 L553.4 280.5 L549.8 276.3 L545.3 274.1 L546.3 272.8 L538.6 275.7 L535.4 274.4 L535.1 274.1 L528.3 273.4 L527.7 270.5 L521.2 269.6 L518.7 270.9 L509.0 272.9 L496.2 274.4 L495.2 278.6 L492.3 280.8 L497.5 282.7 L496.8 284.3 L492.0 284.2 L490.7 285.1 L486.8 283.4 L481.1 283.5 L478.5 285.0 L474.6 283.7 L468.5 282.1 L462.7 281.3 L456.0 285.0 L455.7 287.2 L452.1 285.5 L449.9 289.0 L450.5 289.5 L448.9 292.0 L451.8 294.0 L454.4 294.3 L457.0 298.1 L455.7 298.0 L457.6 298.8 M581.6 289.6 L587.8 287.2 L596.4 284.3 L602.5 285.1 L612.2 287.7 L615.4 285.3 L614.4 282.1 L617.3 280.2 L627.9 282.7 L628.2 285.0 L632.7 286.4 L638.2 285.5 L642.4 285.9 L648.2 289.0 L655.2 289.6 L662.0 288.5 L666.8 286.1 L674.5 287.4 M580.0 289.8 L581.6 289.6 M674.5 287.4 L672.3 290.8 L670.7 293.6 L675.2 293.6 L676.8 294.4 L680.3 293.3 L684.2 295.9 L684.8 297.5 L679.7 297.5 L676.8 298.5 L674.2 298.8 L671.3 301.3 L667.5 301.7 L664.6 303.6 L659.1 302.6 L657.5 304.9 L659.1 307.1 L654.3 310.0 L650.7 311.1 L643.4 313.2 L636.9 313.9 L627.3 311.9 L620.9 310.5 L609.3 310.3 L606.1 305.2 L600.0 302.9 L591.6 302.3 L591.0 296.5 L587.4 293.3 L582.3 291.4 L581.6 289.6 M719.4 311.3 L719.2 309.7 L721.1 307.8 L721.4 306.0 L720.8 303.3 L723.4 302.0 L727.2 302.6 L728.5 301.0 L730.4 296.5 L732.5 292.4 L731.4 292.0 L727.2 293.0 L725.3 294.3 L720.5 294.3 L719.2 293.0 L719.2 290.4 L716.0 289.1 L710.8 288.2 L709.2 287.5 L708.6 285.9 L707.3 283.4 L705.7 279.8 L702.8 277.1 L696.7 275.5 L688.3 276.3 L685.1 277.9 L687.4 278.9 L685.4 281.4 L682.9 285.8 L682.6 286.9 L678.1 288.5 L674.5 287.4 M518.7 371.3 L520.6 369.4 L527.7 369.1 L526.4 364.9 L524.8 362.0 L522.8 360.7 L525.7 357.5 L530.6 357.7 L533.8 354.3 L535.4 351.3 L539.2 347.6 L538.9 344.7 L541.5 343.7 L539.2 342.1 L537.3 340.8 L537.0 338.3 L538.3 336.0 L543.7 336.0 L549.5 333.4 M540.2 327.8 L543.4 329.9 L549.5 333.4 M549.5 333.4 L550.5 335.1 L553.0 337.3 L552.7 339.9 L555.0 342.8 L551.8 343.1 L552.1 346.9 L555.6 348.2 L560.1 350.5 M556.9 355.0 L558.2 352.1 L560.1 350.5 L561.4 349.8 L564.0 350.8 L567.2 352.9 L570.1 354.8 L572.6 355.6 L575.2 356.9 L578.9 357.7 L582.6 357.8 L582.8 359.3 L582.3 362.7 L579.7 362.7 L575.9 362.0 L573.5 361.5 L571.5 360.1 L567.2 359.6 L562.7 357.8 L560.0 356.2 L556.9 355.0 M582.6 357.8 L584.9 357.2 L585.2 359.8 M585.2 359.8 L587.8 356.9 L591.0 357.2 L594.2 358.2 L595.5 359.3 L595.1 361.2 L592.6 361.4 L590.0 361.1 L587.8 361.7 L585.0 361.2 L585.2 359.8 M595.1 361.2 L598.4 361.1 L601.3 360.7 L603.5 359.1 L606.4 357.5 L609.9 356.6 L612.3 356.7 M585.8 377.4 L585.2 373.9 L584.2 371.6 L582.6 368.8 L583.3 367.1 L585.2 366.2 L582.6 364.6 L583.7 362.5 L585.5 363.0 L588.1 363.9 L588.2 366.2 L591.6 366.7 L595.1 366.5 L596.4 367.1 L595.8 368.8 L592.6 370.0 L592.6 372.0 L593.9 373.7 L594.8 371.6 L596.1 371.3 L597.1 376.8 M597.1 376.8 L597.4 379.0 L596.1 381.0 M597.1 376.8 L598.7 376.1 L599.3 373.6 L599.5 370.4 L601.9 370.8 L603.8 367.1 L603.5 366.5 L605.4 363.9 L605.1 362.0 L608.3 360.1 L611.2 360.4 L611.5 358.2 L612.3 356.7 M612.3 356.7 L614.1 356.6 L615.2 358.3 L616.7 359.1 L616.7 361.5 L616.7 364.3 L613.5 366.8 L613.1 370.7 L616.7 370.2 L617.3 373.1 L619.4 373.7 L618.4 376.5 L620.7 376.6 L622.1 378.2 L624.6 377.3 L624.6 378.6 M624.6 378.6 L621.8 380.6 L621.2 382.1 M621.2 382.1 L619.2 382.6 L617.5 384.0 L615.2 384.2 L613.8 387.7 L612.5 388.2 L613.9 391.1 L617.3 395.4 L616.2 398.3 L615.1 398.9 L615.7 400.5 L618.0 403.1 L618.3 404.7 L618.3 407.0 L619.6 409.2 L617.6 412.3 L616.2 415.5 M621.2 382.1 L622.8 382.9 L622.6 384.8 L625.0 385.0 L624.1 388.3 L624.2 391.2 L627.6 389.3 L630.5 389.6 L633.7 388.7 L636.0 391.4 L636.3 394.6 L638.9 397.3 L637.6 401.5 M637.6 401.5 L634.7 401.2 L632.1 401.2 L630.3 401.8 L628.4 404.4 L629.2 408.2 L630.2 410.0 M637.6 401.5 L640.1 402.8 L641.7 400.7 L645.1 400.2 M645.1 400.2 L645.3 404.1 L645.0 407.8 L639.5 410.3 L640.9 412.3 L637.6 412.4 L635.2 414.0 M645.1 400.2 L644.6 398.6 L644.3 396.4 L641.9 394.1 L639.8 391.2 L637.2 387.5 L633.4 385.4 L636.3 383.5 L635.0 380.8 L631.1 380.8 L629.7 377.7 L627.8 375.3 M624.6 378.6 L626.6 379.5 L626.2 375.8 L627.8 375.3 M627.8 375.3 L629.5 374.5 L632.1 374.5 L635.3 373.7 L637.9 372.4 L639.5 373.7 L642.4 374.2 L641.9 376.1 L643.4 377.4 L646.7 378.2 M556.3 416.9 L556.1 414.3 L555.9 412.1 L556.1 408.9 L557.5 405.3 L556.9 400.9 L556.7 398.6 L559.2 396.7 L560.4 395.1 L564.0 394.1 L567.2 390.6 L572.3 386.1 L575.2 383.8 L578.4 381.6 L579.1 378.7 L581.6 377.7 L582.9 378.1 L585.8 377.4 L588.7 377.1 L590.6 375.8 L592.9 374.9 L594.5 375.8 L595.1 378.7 L596.1 381.0 L598.0 382.9 L600.3 385.4 L602.5 388.3 L603.2 391.9 L602.5 396.0 L605.8 396.8 L608.6 394.8 L610.9 392.8 L611.9 394.1 L613.1 394.4 L613.5 398.6 L614.7 402.5 L616.4 407.6 L616.4 409.8 L616.7 414.3 L616.0 416.9 M597.7 404.1 L598.4 406.0 L597.4 408.9 L597.6 410.5 M596.8 412.4 L596.9 413.7 M618.3 416.9 L618.6 413.4 L619.6 411.4 L620.5 408.2 L620.9 405.7 L621.8 404.1 L622.6 404.1 L623.9 404.4 L623.7 406.8 L626.3 406.8 L628.2 408.2 L630.2 410.0 L630.8 412.1 L632.4 413.7 L635.2 414.0 L636.3 415.3 L636.6 416.9 M642.1 416.9 L642.7 414.3 L643.7 414.2 L645.3 413.7 L647.5 412.1 L649.8 410.8 L650.4 408.2 L650.7 405.7 L650.4 403.1 L649.5 398.6 L647.5 395.7 L645.3 394.1 L642.1 391.2 L641.4 389.3 L639.5 387.1 L639.8 383.5 L642.1 381.6 L642.7 380.3 L644.6 380.0 L646.7 378.2 L648.5 377.7 L650.1 378.4 L652.0 378.4 L651.7 380.3 L652.7 382.2 L654.6 381.6 L654.3 379.3 L656.2 378.4 L658.8 377.7 L662.0 377.3 L664.2 376.1 L666.2 375.8 L668.4 374.5 L671.0 374.4 L673.9 373.6 L674.5 372.4 L677.4 371.0 L679.0 368.9 L680.9 367.5 L682.9 365.9 L683.8 363.9 L684.8 362.0 L686.1 360.1 L687.4 357.5 L690.3 356.6 L690.3 353.7 L691.2 351.4 L689.0 350.1 L688.0 350.1 L689.3 348.9 L691.2 348.2 L691.1 346.6 L689.3 345.3 L691.2 345.6 L689.6 343.4 L688.0 341.5 L686.1 337.3 L682.6 335.7 L682.6 335.1 L683.8 333.8 L686.1 331.8 L688.0 330.2 L690.3 329.3 L693.2 329.0 L693.8 327.3 L691.9 327.0 L689.6 326.9 L687.7 326.1 L684.8 327.7 L681.9 328.0 L681.6 326.7 L682.6 326.1 L680.3 325.1 L677.7 323.5 L677.7 321.9 L679.7 322.0 L681.9 321.6 L683.8 319.3 L688.0 317.1 L689.6 316.1 L691.2 316.1 L692.2 317.6 L689.9 320.3 L689.3 322.2 L689.0 323.0 L691.2 322.2 L693.2 320.9 L696.4 319.8 L699.1 319.2 L700.6 320.3 L702.2 320.6 L701.5 323.5 L700.6 325.1 L702.2 326.2 L704.7 326.2 L706.3 326.7 L706.7 328.8 L705.1 329.3 L706.0 331.5 L706.3 333.1 L705.4 335.1 L705.5 336.3 L706.3 337.3 L708.9 336.5 L710.2 335.9 L712.4 335.5 L714.4 334.7 L715.5 333.4 L715.7 331.7 L715.3 328.6 L714.0 326.4 L712.4 324.5 L712.0 323.5 L710.2 321.6 L709.2 320.9 L709.6 319.5 L712.4 318.4 L716.3 316.3 L716.6 314.2 L718.2 311.9 L719.4 311.5 L721.1 310.7 L723.4 309.0 L724.7 308.4 L726.6 310.0 L727.5 310.0 L730.1 309.4 L734.0 307.1 L736.5 304.6 L739.4 302.0 L743.0 298.1 L744.9 295.6 L747.2 293.0 L750.0 291.4 M699.1 319.2 L701.2 317.4 L704.4 315.8 L707.3 313.4 L710.5 314.3 L711.2 312.6 L714.0 312.3 L716.3 311.1 L717.3 309.4 L719.4 311.3 M704.7 326.2 L706.7 325.6 L708.3 324.5 L712.0 323.5 M704.9 340.5 L706.0 339.7 L707.5 339.9 L706.3 340.8 L704.9 340.5 M750.0 261.9 L743.6 266.4 L739.8 268.9 L734.3 271.8 L739.1 272.1 L740.7 273.7 L742.0 275.0 L745.2 273.4 L748.8 273.4 L750.0 274.1 M741.4 270.5 L743.3 270.5 L743.3 271.5 L741.7 271.5 L741.4 270.5 M750.0 310.7 L748.8 311.6 L749.1 313.5 L750.0 314.2 M750.0 320.0 L748.4 319.2 L749.1 321.2 L748.8 322.9 L747.8 324.1 L746.2 325.7 L744.6 327.7 L743.6 328.1 L740.7 329.4 L739.8 328.3 L740.9 327.0 L738.8 327.7 L738.8 329.3 L737.2 331.2 L736.5 332.8 L734.9 333.3 L734.0 332.6 L731.1 333.3 L727.9 333.4 L725.6 333.6 L723.7 335.4 L721.8 336.8 L720.2 337.3 L720.2 338.4 L722.1 338.3 L724.7 338.6 L725.3 337.3 L728.5 337.0 L730.1 336.3 L732.4 335.9 L734.0 336.2 L734.8 336.3 L733.7 337.3 L733.7 338.6 L734.6 339.5 L735.7 340.0 L737.5 338.3 L739.4 337.0 L738.5 336.0 L738.8 335.1 L739.8 336.0 L740.7 336.3 L743.6 336.3 L745.2 334.7 L745.9 336.2 L746.8 334.4 L748.4 334.1 L748.8 335.2 L750.0 334.7 M723.7 340.3 L725.9 338.6 L726.9 338.1 L728.8 338.3 L730.3 337.1 L732.2 337.6 L732.5 338.9 L730.8 340.7 L728.7 339.9 L726.9 342.3 L725.3 341.5 L725.0 340.2 L723.7 340.3 M720.2 338.4 L722.7 339.5 L723.4 340.7 L723.4 342.1 L722.7 343.4 L721.8 346.0 L720.8 346.9 L719.5 347.9 L719.2 346.0 L717.9 347.1 L717.9 344.4 L719.2 342.8 L717.9 342.8 L716.6 342.8 L716.3 341.1 L716.9 339.9 L718.5 339.5 L720.2 338.4 M714.7 337.6 L715.5 336.2 M727.5 331.2 L728.0 330.9 M743.6 325.9 L744.6 324.5 L744.7 325.6 L743.6 325.9 M688.3 367.0 L690.3 366.2 L691.6 367.1 L691.1 368.8 L690.3 370.4 L689.6 372.9 L688.0 375.8 L687.9 377.1 L687.1 375.7 L685.8 373.9 L685.4 372.0 L687.4 368.4 L688.3 367.0 M648.7 385.4 L650.4 383.7 L652.0 383.2 L654.9 382.9 L656.2 384.3 L654.6 387.1 L653.0 388.3 L651.4 389.0 L648.8 388.0 L648.7 385.4 M709.7 363.6 L711.8 361.2 M715.0 356.7 L716.3 355.9 M713.7 358.5 L714.0 358.0 M702.0 368.0 L702.6 367.6 M697.0 369.4 L698.9 368.8 M718.5 350.1 L719.4 349.8 M720.2 349.8 L720.6 348.5 M687.1 388.0 L688.3 387.7 L692.0 388.0 L692.5 391.9 L693.2 392.8 L692.2 395.1 L690.3 396.4 L690.3 399.2 L690.6 401.5 L692.2 402.8 L693.8 401.5 L695.7 402.5 L698.0 403.1 L698.3 407.1 L695.7 405.7 L693.5 405.0 L693.2 402.8 L690.6 402.6 L689.3 403.7 L687.1 403.1 L687.1 401.2 L688.2 400.5 L686.9 401.0 L685.9 399.9 L685.3 398.3 L684.6 395.1 L686.1 395.9 L686.3 394.1 L686.6 391.2 L687.1 388.0 M686.1 404.1 L688.3 404.4 L689.9 405.3 L689.9 407.9 L688.7 408.2 L687.7 406.6 L686.1 404.1 M698.9 407.1 L702.2 407.1 L702.8 409.2 L703.4 411.4 L701.2 411.8 L700.6 410.5 L698.9 407.1 M698.9 410.5 L701.2 411.4 L701.8 414.7 L700.6 415.3 L700.2 412.4 L698.9 410.5 M691.6 409.2 L695.1 410.3 L693.5 413.9 L691.2 413.9 L691.6 409.2 M695.4 407.1 L698.0 408.9 L696.7 409.2 L695.4 407.1 M694.4 416.9 L694.4 414.0 L695.7 412.3 L696.5 412.7 L695.4 415.6 L695.7 416.9 M696.1 416.6 L698.0 411.1 L698.1 413.4 L696.7 416.6 M680.9 416.9 L682.9 413.4 L683.5 410.8 L684.2 413.7 L682.6 416.9 M684.8 407.9 L686.1 408.9 L685.1 409.5 L684.8 407.9 M404.1 351.3 L403.5 352.4 L404.4 354.6 L406.2 357.5 L407.5 359.1 L408.4 360.7 L409.7 363.6 L411.6 367.1 L413.6 370.5 L413.9 372.0 L415.8 374.7 L418.1 376.8 L419.0 380.0 L418.7 384.5 L419.7 386.9 L423.5 389.6 L425.5 394.4 L426.4 397.3 L428.0 399.2 L430.6 400.2 L433.5 402.8 L435.7 405.0 L438.0 406.6 L438.6 407.6 L438.6 409.0 L437.0 410.3 L438.2 410.3 L438.5 410.6 L441.2 413.9 L442.8 414.0 L446.0 413.1 L449.2 412.7 L452.1 411.6 L456.6 411.3 L460.5 410.5 L462.7 409.0 L464.4 409.4 L463.7 411.8 L463.9 413.9 L463.1 416.9 M404.1 351.3 L404.6 352.4 L406.2 355.6 L407.5 356.6 L409.6 358.3 L410.2 357.5 L410.7 354.6 L411.6 352.7 M395.9 376.8 L418.1 376.8 M423.5 389.6 L422.9 389.9 L418.4 392.7 L416.6 399.2 L416.9 401.6 M416.9 401.6 L415.7 406.6 L412.3 409.5 L411.8 412.6 L409.7 413.5 L409.4 416.9 M416.9 401.6 L420.3 401.8 L421.3 399.6 L423.2 400.9 L425.1 400.2 L428.0 400.9 L430.9 402.1 L435.7 407.4 M435.7 407.4 L433.8 409.8 L433.7 411.9 L437.0 412.3 L437.5 412.2 M437.5 412.2 L438.5 410.6 M435.7 407.4 L438.0 406.6 M437.5 412.2 L437.0 414.3 L437.7 416.9 M470.8 407.3 L473.0 406.6 L474.6 407.1 L472.4 407.9 L470.8 407.3" fill="none" stroke="#d8c800" stroke-width="0.8" stroke-dasharray="0.7 4.3" opacity="0.5"/>
</g>
<path d="M749.4 254.8H395.9V415.3H749.4" fill="none" stroke="#000" stroke-width="1.2"/>
<path d="M749.4 254.8V415.3" fill="none" stroke="#000" stroke-width="0.45"/>
<path d="M392.7 399.25H395.9" stroke="#000" stroke-width="0.7"/>
<text x="390.1" y="401.55" font-size="8.15" text-anchor="end" fill="#1a1a1a" stroke="#1a1a1a" stroke-width="0.18">15°N</text>
<path d="M392.7 383.20H395.9" stroke="#000" stroke-width="0.7"/>
<text x="390.1" y="385.50" font-size="8.15" text-anchor="end" fill="#1a1a1a" stroke="#1a1a1a" stroke-width="0.18">20°N</text>
<path d="M392.7 367.15H395.9" stroke="#000" stroke-width="0.7"/>
<text x="390.1" y="369.45" font-size="8.15" text-anchor="end" fill="#1a1a1a" stroke="#1a1a1a" stroke-width="0.18">25°N</text>
<path d="M392.7 351.10H395.9" stroke="#000" stroke-width="0.7"/>
<text x="390.1" y="353.40" font-size="8.15" text-anchor="end" fill="#1a1a1a" stroke="#1a1a1a" stroke-width="0.18">30°N</text>
<path d="M392.7 335.05H395.9" stroke="#000" stroke-width="0.7"/>
<text x="390.1" y="337.35" font-size="8.15" text-anchor="end" fill="#1a1a1a" stroke="#1a1a1a" stroke-width="0.18">35°N</text>
<path d="M392.7 319.00H395.9" stroke="#000" stroke-width="0.7"/>
<text x="390.1" y="321.30" font-size="8.15" text-anchor="end" fill="#1a1a1a" stroke="#1a1a1a" stroke-width="0.18">40°N</text>
<path d="M392.7 302.95H395.9" stroke="#000" stroke-width="0.7"/>
<text x="390.1" y="305.25" font-size="8.15" text-anchor="end" fill="#1a1a1a" stroke="#1a1a1a" stroke-width="0.18">45°N</text>
<path d="M392.7 286.90H395.9" stroke="#000" stroke-width="0.7"/>
<text x="390.1" y="289.20" font-size="8.15" text-anchor="end" fill="#1a1a1a" stroke="#1a1a1a" stroke-width="0.18">50°N</text>
<path d="M392.7 270.85H395.9" stroke="#000" stroke-width="0.7"/>
<text x="390.1" y="273.15" font-size="8.15" text-anchor="end" fill="#1a1a1a" stroke="#1a1a1a" stroke-width="0.18">55°N</text>
<path d="M392.7 254.80H395.9" stroke="#000" stroke-width="0.7"/>
<text x="390.1" y="257.10" font-size="8.15" text-anchor="end" fill="#1a1a1a" stroke="#1a1a1a" stroke-width="0.18">60°N</text>
<path d="M428.04 415.3V418.5" stroke="#000" stroke-width="0.7"/>
<text x="428.0" y="427.70" font-size="8.15" text-anchor="middle" fill="#1a1a1a" stroke="#1a1a1a" stroke-width="0.18">40°E</text>
<path d="M492.31 415.3V418.5" stroke="#000" stroke-width="0.7"/>
<text x="492.3" y="427.70" font-size="8.15" text-anchor="middle" fill="#1a1a1a" stroke="#1a1a1a" stroke-width="0.18">60°E</text>
<path d="M556.58 415.3V418.5" stroke="#000" stroke-width="0.7"/>
<text x="556.6" y="427.70" font-size="8.15" text-anchor="middle" fill="#1a1a1a" stroke="#1a1a1a" stroke-width="0.18">80°E</text>
<path d="M620.85 415.3V418.5" stroke="#000" stroke-width="0.7"/>
<text x="620.9" y="427.70" font-size="8.15" text-anchor="middle" fill="#1a1a1a" stroke="#1a1a1a" stroke-width="0.18">100°E</text>
<path d="M685.13 415.3V418.5" stroke="#000" stroke-width="0.7"/>
<text x="685.1" y="427.70" font-size="8.15" text-anchor="middle" fill="#1a1a1a" stroke="#1a1a1a" stroke-width="0.18">120°E</text>
<path d="M749.40 415.3V418.5" stroke="#000" stroke-width="0.7"/>
<text x="749.4" y="427.70" font-size="8.15" text-anchor="middle" fill="#1a1a1a" stroke="#1a1a1a" stroke-width="0.18">140°E</text>
<rect x="755.3" y="254.80" width="7.8" height="160.50" fill="rgb(253,253,0)"/>
<rect x="755.3" y="259.14" width="7.8" height="156.16" fill="rgb(253,236,5)"/>
<rect x="755.3" y="263.48" width="7.8" height="151.82" fill="rgb(253,218,9)"/>
<rect x="755.3" y="267.81" width="7.8" height="147.49" fill="rgb(253,198,14)"/>
<rect x="755.3" y="272.15" width="7.8" height="143.15" fill="rgb(253,178,19)"/>
<rect x="755.3" y="276.49" width="7.8" height="138.81" fill="rgb(253,160,23)"/>
<rect x="755.3" y="280.83" width="7.8" height="134.47" fill="rgb(253,141,28)"/>
<rect x="755.3" y="285.16" width="7.8" height="130.14" fill="rgb(253,122,33)"/>
<rect x="755.3" y="289.50" width="7.8" height="125.80" fill="rgb(253,104,37)"/>
<rect x="755.3" y="293.84" width="7.8" height="121.46" fill="rgb(253,85,42)"/>
<rect x="755.3" y="298.18" width="7.8" height="117.12" fill="rgb(253,65,47)"/>
<rect x="755.3" y="302.52" width="7.8" height="112.78" fill="rgb(253,70,63)"/>
<rect x="755.3" y="306.85" width="7.8" height="108.45" fill="rgb(253,85,85)"/>
<rect x="755.3" y="311.19" width="7.8" height="104.11" fill="rgb(253,113,113)"/>
<rect x="755.3" y="315.53" width="7.8" height="99.77" fill="rgb(253,141,141)"/>
<rect x="755.3" y="319.87" width="7.8" height="95.43" fill="rgb(253,169,169)"/>
<rect x="755.3" y="324.21" width="7.8" height="91.09" fill="rgb(253,197,197)"/>
<rect x="755.3" y="328.54" width="7.8" height="86.76" fill="rgb(253,226,226)"/>
<rect x="755.3" y="332.88" width="7.8" height="82.42" fill="rgb(242,230,242)"/>
<rect x="755.3" y="337.22" width="7.8" height="78.08" fill="rgb(226,226,253)"/>
<rect x="755.3" y="341.56" width="7.8" height="73.74" fill="rgb(197,197,253)"/>
<rect x="755.3" y="345.89" width="7.8" height="69.41" fill="rgb(169,169,253)"/>
<rect x="755.3" y="350.23" width="7.8" height="65.07" fill="rgb(141,141,253)"/>
<rect x="755.3" y="354.57" width="7.8" height="60.73" fill="rgb(113,113,253)"/>
<rect x="755.3" y="358.91" width="7.8" height="56.39" fill="rgb(85,85,253)"/>
<rect x="755.3" y="363.25" width="7.8" height="52.05" fill="rgb(63,70,253)"/>
<rect x="755.3" y="367.58" width="7.8" height="47.72" fill="rgb(47,65,253)"/>
<rect x="755.3" y="371.92" width="7.8" height="43.38" fill="rgb(42,85,253)"/>
<rect x="755.3" y="376.26" width="7.8" height="39.04" fill="rgb(37,104,253)"/>
<rect x="755.3" y="380.60" width="7.8" height="34.70" fill="rgb(33,122,253)"/>
<rect x="755.3" y="384.94" width="7.8" height="30.36" fill="rgb(28,141,253)"/>
<rect x="755.3" y="389.27" width="7.8" height="26.03" fill="rgb(23,160,253)"/>
<rect x="755.3" y="393.61" width="7.8" height="21.69" fill="rgb(19,178,253)"/>
<rect x="755.3" y="397.95" width="7.8" height="17.35" fill="rgb(14,197,253)"/>
<rect x="755.3" y="402.29" width="7.8" height="13.01" fill="rgb(9,216,253)"/>
<rect x="755.3" y="406.62" width="7.8" height="8.68" fill="rgb(5,235,253)"/>
<rect x="755.3" y="410.96" width="7.8" height="4.34" fill="rgb(0,253,253)"/>
<rect x="755.3" y="254.8" width="7.8" height="160.5" fill="none" stroke="#5a4a42" stroke-width="0.5"/>
<path d="M763.1 410.96h2.4" stroke="#000" stroke-width="0.7"/>
<text x="768.8" y="413.36" font-size="8.15" fill="#1a1a1a" stroke="#1a1a1a" stroke-width="0.18">0</text>
<path d="M763.1 397.95h2.4" stroke="#000" stroke-width="0.7"/>
<text x="768.8" y="400.35" font-size="8.15" fill="#1a1a1a" stroke="#1a1a1a" stroke-width="0.18">3</text>
<path d="M763.1 384.94h2.4" stroke="#000" stroke-width="0.7"/>
<text x="768.8" y="387.34" font-size="8.15" fill="#1a1a1a" stroke="#1a1a1a" stroke-width="0.18">6</text>
<path d="M763.1 371.92h2.4" stroke="#000" stroke-width="0.7"/>
<text x="768.8" y="374.32" font-size="8.15" fill="#1a1a1a" stroke="#1a1a1a" stroke-width="0.18">9</text>
<path d="M763.1 358.91h2.4" stroke="#000" stroke-width="0.7"/>
<text x="768.8" y="361.31" font-size="8.15" fill="#1a1a1a" stroke="#1a1a1a" stroke-width="0.18">12</text>
<path d="M763.1 345.89h2.4" stroke="#000" stroke-width="0.7"/>
<text x="768.8" y="348.29" font-size="8.15" fill="#1a1a1a" stroke="#1a1a1a" stroke-width="0.18">15</text>
<path d="M763.1 332.88h2.4" stroke="#000" stroke-width="0.7"/>
<text x="768.8" y="335.28" font-size="8.15" fill="#1a1a1a" stroke="#1a1a1a" stroke-width="0.18">18</text>
<path d="M763.1 319.87h2.4" stroke="#000" stroke-width="0.7"/>
<text x="768.8" y="322.27" font-size="8.15" fill="#1a1a1a" stroke="#1a1a1a" stroke-width="0.18">21</text>
<path d="M763.1 306.85h2.4" stroke="#000" stroke-width="0.7"/>
<text x="768.8" y="309.25" font-size="8.15" fill="#1a1a1a" stroke="#1a1a1a" stroke-width="0.18">24</text>
<path d="M763.1 293.84h2.4" stroke="#000" stroke-width="0.7"/>
<text x="768.8" y="296.24" font-size="8.15" fill="#1a1a1a" stroke="#1a1a1a" stroke-width="0.18">27</text>
<path d="M763.1 280.83h2.4" stroke="#000" stroke-width="0.7"/>
<text x="768.8" y="283.23" font-size="8.15" fill="#1a1a1a" stroke="#1a1a1a" stroke-width="0.18">30</text>
<path d="M763.1 267.81h2.4" stroke="#000" stroke-width="0.7"/>
<text x="768.8" y="270.21" font-size="8.15" fill="#1a1a1a" stroke="#1a1a1a" stroke-width="0.18">33</text>
</svg><div class="abs" style="left:713.8px;top:466px;width:86.2px;height:13px;background:#4c5052;"></div><div class="abs" style="left:713.8px;top:466px;width:3.6px;height:13px;background:#4a88c7;"></div><div class="t" style="left:741.90px;top:466.90px;color:#9a9da0;font-size:6.50px;letter-spacing:-0.167px;">4% / 30.0G</div>
</div>
</body></html>
